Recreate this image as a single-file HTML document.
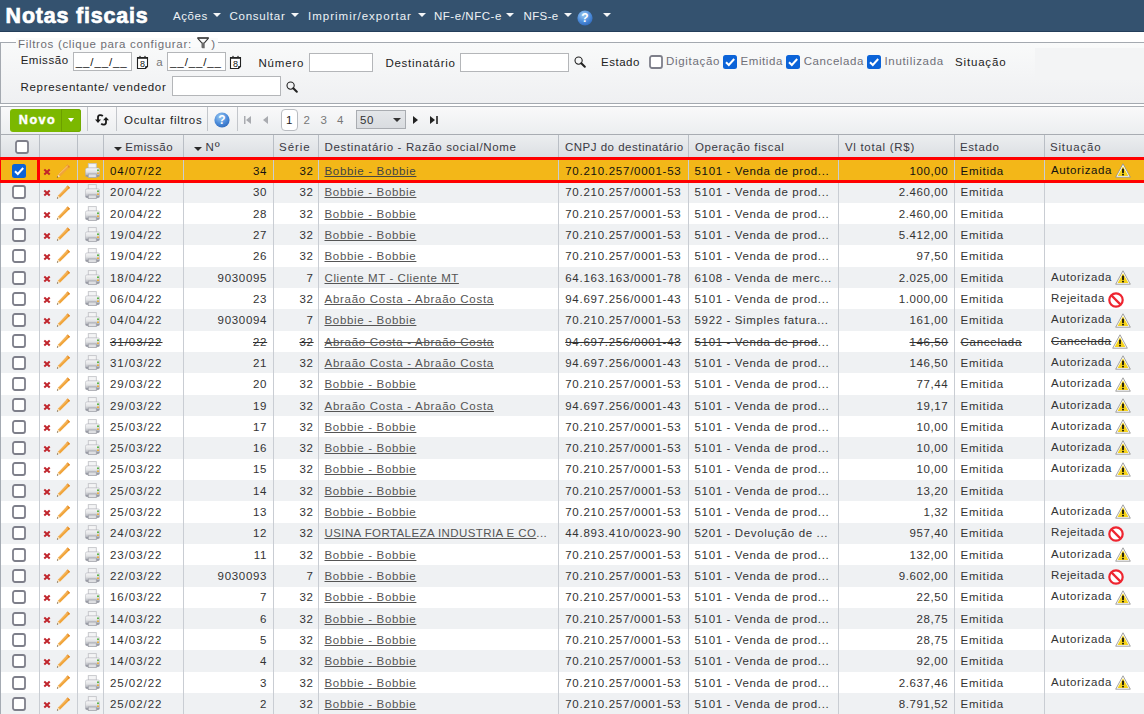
<!DOCTYPE html><html><head><meta charset="utf-8"><style>
*{box-sizing:border-box}
html,body{margin:0;padding:0}
body{width:1144px;height:714px;overflow:hidden;position:relative;background:#fff;font-family:"Liberation Sans",sans-serif;font-size:11.5px;color:#222}
.abs{position:absolute}
.t{position:absolute;white-space:nowrap;letter-spacing:0.6px}
svg{position:absolute;display:block}
#hdr{left:0;top:0;width:1144px;height:32px;background:#34526f;border-bottom:1px solid #243f5b}
#title{left:6px;top:3px;font-size:21.4px;font-weight:bold;color:#fff;line-height:26px;letter-spacing:0.2px}
.menu{color:#eef2f6;font-size:11.5px;top:8.4px;line-height:16px}
.arr{position:absolute;width:0;height:0;border-left:4.4px solid transparent;border-right:4.4px solid transparent;border-top:4.4px solid #f4f6f8}
#fs{left:0;top:42px;width:1160px;height:62px;border:1px solid #a4a9b0;background:linear-gradient(#f9fafa,#eff0f2)}
#legend{left:16px;top:38px;width:201.5px;height:9px;background:#fafbfb;}
.lab{line-height:14px}
.inp{position:absolute;background:#fff;border:1px solid #b4b6b9}
#tb{left:0;top:106px;width:1160px;height:29px;border-top:1px solid #a8acb2;border-bottom:1px solid #a8acb2;border-left:1px solid #a8acb2;background:linear-gradient(#f9f9fa,#eceef0)}
.sep{position:absolute;top:107px;width:1px;height:24px;background:#c3c6cb}
#th{left:0;top:135px;width:1144px;height:22px;background:linear-gradient(#eceef0,#dcdfe3);border-left:1px solid #a8acb2}
.vl{position:absolute;width:1px;background:#c9cdd3}
.row{position:absolute;left:0;width:1144px;border-left:1px solid #a5abb3}
.g{background:#eff1f3}
.sel{background:#f3b718}
.lnk{color:#555;text-decoration:underline}
.num{text-align:right;letter-spacing:0.75px}
.hd{color:#3a3a44;top:140px;line-height:14px}
.strike{text-decoration:line-through}.lnk.strike{text-decoration:underline line-through}
</style></head><body>
<div id="hdr" class="abs"></div>
<div id="title" class="t" style="left:5.6px;top:2.8px;letter-spacing:0.85px;-webkit-text-stroke:0.7px #fff">Notas fiscais</div>
<div class="t menu" style="left:172.9px;letter-spacing:0.575px">Ações</div>
<div class="arr" style="left:212.7px;top:12.8px"></div>
<div class="t menu" style="left:229.5px;letter-spacing:0.75px">Consultar</div>
<div class="arr" style="left:291px;top:12.8px"></div>
<div class="t menu" style="left:308px;letter-spacing:1.0px">Imprimir/exportar</div>
<div class="arr" style="left:417.6px;top:12.8px"></div>
<div class="t menu" style="left:434px;letter-spacing:0.522px">NF-e/NFC-e</div>
<div class="arr" style="left:506.4px;top:12.8px"></div>
<div class="t menu" style="left:523.5px;letter-spacing:0.375px">NFS-e</div>
<div class="arr" style="left:563.5px;top:12.8px"></div>
<svg style="left:577px;top:10px" width="16" height="16" viewBox="0 0 16 16"><defs><radialGradient id="hg" cx="0.4" cy="0.3" r="0.8"><stop offset="0" stop-color="#9cc9f2"/><stop offset="0.55" stop-color="#4d8ddb"/><stop offset="1" stop-color="#2a62b5"/></radialGradient></defs><circle cx="8" cy="8" r="7.6" fill="url(#hg)"/><text x="8" y="12.3" font-family="Liberation Sans" font-weight="bold" font-size="12" fill="#fff" text-anchor="middle">?</text></svg>
<div class="arr" style="left:602.7px;top:12.8px"></div>
<div id="fs" class="abs"></div>
<div id="legend" class="abs"></div>
<div class="t lab" style="left:18px;top:36.6px;color:#6e6e74;letter-spacing:0.677px">Filtros (clique para configurar:</div>
<svg style="left:197px;top:37px" width="13" height="13" viewBox="0 0 13 13"><path d="M0.3 0.3H11.8V1.7H0.3Z" fill="#111"/><path d="M0.8 1.4L5 6.2M11.3 1.4L7.2 6.2" stroke="#333" stroke-width="1.1"/><path d="M4.5 5.6H7.7V11.3L5.4 11.3L4.5 10.6Z" fill="#6a6a6a"/></svg>
<div class="t lab" style="left:211.2px;top:36.6px;color:#6e6e74">)</div>
<div class="t lab" style="left:20.65px;top:52.7px;color:#222;letter-spacing:0.558px;">Emissão</div>
<div class="inp" style="left:73px;top:52.3px;width:59.3px;height:19px"></div>
<div class="t lab" style="left:75.8px;top:54.9px;color:#111;letter-spacing:0.88px">__/__/__</div>
<svg style="left:135.5px;top:54.8px" width="13" height="15" viewBox="0 0 13 15"><path d="M1.5 2.5H11.5V11.5L9.5 13.5H1.5Z" fill="#fff" stroke="#222" stroke-width="1.1"/><path d="M1.5 3H11.5" stroke="#222" stroke-width="1.6"/><circle cx="4" cy="1.6" r="0.8" fill="#444"/><circle cx="9" cy="1.6" r="0.8" fill="#444"/><path d="M9.5 13.5V11.5H11.5" fill="none" stroke="#222" stroke-width="0.9"/><text x="6.4" y="12.1" font-family="Liberation Sans" font-size="9" fill="#111" text-anchor="middle">8</text></svg>
<div class="t lab" style="left:156.2px;top:54.5px;color:#777;letter-spacing:0px;">a</div>
<div class="inp" style="left:167.3px;top:52.3px;width:59.1px;height:19px"></div>
<div class="t lab" style="left:170.1px;top:54.9px;color:#111;letter-spacing:0.88px">__/__/__</div>
<svg style="left:229px;top:54.8px" width="13" height="15" viewBox="0 0 13 15"><path d="M1.5 2.5H11.5V11.5L9.5 13.5H1.5Z" fill="#fff" stroke="#222" stroke-width="1.1"/><path d="M1.5 3H11.5" stroke="#222" stroke-width="1.6"/><circle cx="4" cy="1.6" r="0.8" fill="#444"/><circle cx="9" cy="1.6" r="0.8" fill="#444"/><path d="M9.5 13.5V11.5H11.5" fill="none" stroke="#222" stroke-width="0.9"/><text x="6.4" y="12.1" font-family="Liberation Sans" font-size="9" fill="#111" text-anchor="middle">8</text></svg>
<div class="t lab" style="left:258.5px;top:56px;color:#222;letter-spacing:0.8px;">Número</div>
<div class="inp" style="left:309.3px;top:52.6px;width:63.4px;height:19.1px"></div>
<div class="t lab" style="left:385.4px;top:56px;color:#222;letter-spacing:0.745px;">Destinatário</div>
<div class="inp" style="left:460.4px;top:52.6px;width:108.4px;height:19.1px"></div>
<svg style="left:574px;top:56px" width="12" height="12" viewBox="0 0 12 12"><circle cx="4.6" cy="4.6" r="3.6" fill="none" stroke="#222" stroke-width="1.1"/><path d="M7.3 7.3L10.8 10.8" stroke="#222" stroke-width="2" stroke-linecap="round"/></svg>
<div class="t lab" style="left:601px;top:54.8px;color:#222;letter-spacing:0.52px;">Estado</div>
<svg class="fcb" style="left:648.7px;top:55px" width="14" height="14" viewBox="0 0 14 14"><rect x="1" y="1" width="12" height="12" rx="2" fill="#fff" stroke="#7e7f8a" stroke-width="1.8"/></svg>
<div class="t lab" style="left:666px;top:53.5px;color:#707078;letter-spacing:0.688px;">Digitação</div>
<svg class="fcb" style="left:723px;top:55px" width="14" height="14" viewBox="0 0 14 14"><rect x="0" y="0" width="14" height="14" rx="2.5" fill="#0b63d8"/><path d="M3 7.2L5.8 10L11.2 4" stroke="#fff" stroke-width="2" fill="none"/></svg>
<div class="t lab" style="left:740.5px;top:53.5px;color:#707078;letter-spacing:0.583px;">Emitida</div>
<svg class="fcb" style="left:786.4px;top:55px" width="14" height="14" viewBox="0 0 14 14"><rect x="0" y="0" width="14" height="14" rx="2.5" fill="#0b63d8"/><path d="M3 7.2L5.8 10L11.2 4" stroke="#fff" stroke-width="2" fill="none"/></svg>
<div class="t lab" style="left:803.7px;top:53.5px;color:#707078;letter-spacing:0.587px;">Cancelada</div>
<svg class="fcb" style="left:867px;top:55px" width="14" height="14" viewBox="0 0 14 14"><rect x="0" y="0" width="14" height="14" rx="2.5" fill="#0b63d8"/><path d="M3 7.2L5.8 10L11.2 4" stroke="#fff" stroke-width="2" fill="none"/></svg>
<div class="t lab" style="left:884.4px;top:53.5px;color:#707078;letter-spacing:0.7px;">Inutilizada</div>
<div class="t lab" style="left:955px;top:54.7px;color:#222;letter-spacing:0.829px;">Situação</div>
<div class="abs" style="left:1035px;top:48px;width:120px;height:31px;background:#f3f4f5"></div>
<div class="t lab" style="left:20.5px;top:80px;color:#222;letter-spacing:0.705px;">Representante/ vendedor</div>
<div class="inp" style="left:172.4px;top:76.4px;width:108.2px;height:19.6px"></div>
<svg style="left:286px;top:80.6px" width="12" height="12" viewBox="0 0 12 12"><circle cx="4.6" cy="4.6" r="3.6" fill="none" stroke="#222" stroke-width="1.1"/><path d="M7.3 7.3L10.8 10.8" stroke="#222" stroke-width="2" stroke-linecap="round"/></svg>
<div id="tb" class="abs"></div>
<div class="abs" style="left:10px;top:109px;width:71px;height:23px;border-radius:3px;background:#7bb800;"></div>
<div class="abs" style="left:61px;top:109px;width:20px;height:23px;border-radius:0 3px 3px 0;border:1px solid #72ab00;border-left:1px solid #6c9f00"></div>
<div class="t" style="left:18.8px;top:112.1px;font-size:12.6px;font-weight:bold;color:#fff;line-height:16px;letter-spacing:1.5px;-webkit-text-stroke:0.45px #fff">Novo</div>
<div class="arr" style="left:67.5px;top:118px;border-left-width:3.5px;border-right-width:3.5px;border-top:4px solid #fff"></div>
<div class="sep" style="left:87px"></div>
<div class="sep" style="left:116px"></div>
<div class="sep" style="left:207.3px"></div>
<div class="sep" style="left:237.3px"></div>
<svg style="left:94px;top:113px" width="16" height="14" viewBox="0 0 16 14"><path d="M8.8 3.1C7.5 1.7 4 1.6 4 4.2V7.3" fill="none" stroke="#1a1a1a" stroke-width="1.8"/><path d="M1 6.6H7L4 9.9Z" fill="#1a1a1a"/><path d="M7.2 10.6C8.5 12 12 12.1 12 9.5V6.6" fill="none" stroke="#1a1a1a" stroke-width="1.8"/><path d="M9 7.2H15L12 3.9Z" fill="#1a1a1a"/></svg>
<div class="t" style="left:124px;top:112.8px;line-height:14px;color:#222;letter-spacing:0.714px">Ocultar filtros</div>
<svg style="left:214px;top:111.8px" width="16" height="16" viewBox="0 0 16 16"><circle cx="8" cy="8" r="7.6" fill="url(#hg)"/><text x="8" y="12.3" font-family="Liberation Sans" font-weight="bold" font-size="12" fill="#fff" text-anchor="middle">?</text></svg>
<svg style="left:243.5px;top:116px" width="8" height="8" viewBox="0 0 8 8"><rect x="0" y="0" width="1.5" height="8" fill="#a9abb0"/><path d="M7 0V8L2 4Z" fill="#a9abb0"/></svg>
<svg style="left:262.5px;top:116px" width="5" height="8" viewBox="0 0 5 8"><path d="M5 0V8L0 4Z" fill="#a9abb0"/></svg>
<div class="abs" style="left:281.4px;top:109.2px;width:16.5px;height:21.6px;border:1px solid #b9bcc1;border-radius:4px;background:#fff"></div>
<div class="t" style="left:286px;top:113px;line-height:14px;color:#222">1</div>
<div class="t" style="left:303.4px;top:113px;line-height:14px;color:#777">2</div>
<div class="t" style="left:320.5px;top:113px;line-height:14px;color:#777">3</div>
<div class="t" style="left:337px;top:113px;line-height:14px;color:#777">4</div>
<div class="abs" style="left:356.4px;top:110.2px;width:49.3px;height:18.5px;border:1px solid #a9acb1;background:linear-gradient(#e4e6e9,#d9dce0)"></div>
<div class="t" style="left:360px;top:112.5px;line-height:14px;color:#333">50</div>
<div class="arr" style="left:392.7px;top:118px;border-top-color:#333;border-left-width:4.2px;border-right-width:4.2px"></div>
<svg style="left:412.5px;top:116px" width="5" height="8" viewBox="0 0 5 8"><path d="M0 0V8L5 4Z" fill="#222"/></svg>
<svg style="left:429.5px;top:116px" width="8" height="8" viewBox="0 0 8 8"><path d="M0 0V8L5 4Z" fill="#222"/><rect x="6.2" y="0" width="1.6" height="8" fill="#222"/></svg>
<div id="th" class="abs"></div>
<div class="vl" style="left:38.8px;top:135px;height:22px;background:#b9bec5"></div>
<div class="vl" style="left:76.9px;top:135px;height:22px;background:#b9bec5"></div>
<div class="vl" style="left:103.1px;top:135px;height:22px;background:#b9bec5"></div>
<div class="vl" style="left:183.1px;top:135px;height:22px;background:#b9bec5"></div>
<div class="vl" style="left:273.1px;top:135px;height:22px;background:#b9bec5"></div>
<div class="vl" style="left:318.1px;top:135px;height:22px;background:#b9bec5"></div>
<div class="vl" style="left:558px;top:135px;height:22px;background:#b9bec5"></div>
<div class="vl" style="left:688.1px;top:135px;height:22px;background:#b9bec5"></div>
<div class="vl" style="left:838px;top:135px;height:22px;background:#b9bec5"></div>
<div class="vl" style="left:954.2px;top:135px;height:22px;background:#b9bec5"></div>
<div class="vl" style="left:1044.2px;top:135px;height:22px;background:#b9bec5"></div>
<svg class="cb" style="left:15px;top:140px" width="14" height="14" viewBox="0 0 14 14"><rect x="1" y="1" width="12" height="12" rx="2" fill="#fff" stroke="#7e7f8a" stroke-width="1.8"/></svg>
<div class="arr" style="left:113.8px;top:146.8px;border-top-color:#2a2a2a;border-left-width:4.2px;border-right-width:4.2px;border-top-width:4.2px"></div>
<div class="arr" style="left:194px;top:146.8px;border-top-color:#2a2a2a;border-left-width:4.2px;border-right-width:4.2px;border-top-width:4.2px"></div>
<div class="t hd" style="left:125.3px;letter-spacing:0.55px">Emissão</div>
<div class="t hd" style="left:205.6px;letter-spacing:0.9px">N<span style="font-size:13.5px;position:relative;top:-0.5px;letter-spacing:0">º</span></div>
<div class="t hd" style="left:279px;letter-spacing:0.975px">Série</div>
<div class="t hd" style="left:324.6px;letter-spacing:0.648px">Destinatário - Razão social/Nome</div>
<div class="t hd" style="left:564.9px;letter-spacing:0.505px">CNPJ do destinatário</div>
<div class="t hd" style="left:695px;letter-spacing:0.629px">Operação fiscal</div>
<div class="t hd" style="left:844.9px;letter-spacing:0.717px">Vl total (R$)</div>
<div class="t hd" style="left:960px;letter-spacing:0.6px">Estado</div>
<div class="t hd" style="left:1049.9px;letter-spacing:0.857px">Situação</div>
<div class="row sel" style="top:160.1px;height:21.37px"></div>
<div class="vl" style="left:38.8px;top:160.1px;height:21.37px"></div>
<div class="vl" style="left:76.9px;top:160.1px;height:21.37px"></div>
<div class="vl" style="left:103.1px;top:160.1px;height:21.37px"></div>
<div class="vl" style="left:183.1px;top:160.1px;height:21.37px"></div>
<div class="vl" style="left:273.1px;top:160.1px;height:21.37px"></div>
<div class="vl" style="left:318.1px;top:160.1px;height:21.37px"></div>
<div class="vl" style="left:558px;top:160.1px;height:21.37px"></div>
<div class="vl" style="left:688.1px;top:160.1px;height:21.37px"></div>
<div class="vl" style="left:838px;top:160.1px;height:21.37px"></div>
<div class="vl" style="left:954.2px;top:160.1px;height:21.37px"></div>
<div class="vl" style="left:1044.2px;top:160.1px;height:21.37px"></div>
<svg class="cb" style="left:12px;top:163.9px" width="14" height="14" viewBox="0 0 14 14"><rect x="0" y="0" width="14" height="14" rx="2.5" fill="#0b63d8"/><path d="M3 7.2L5.8 10L11.2 4" stroke="#fff" stroke-width="2" fill="none"/></svg>
<svg style="left:42.7px;top:168px" width="8" height="8" viewBox="0 0 8 8"><path d="M1.3 1.5L6.7 6.5M6.7 1.5L1.3 6.5" stroke="#c0242b" stroke-width="2"/></svg>
<svg style="left:56px;top:163.5px" width="15" height="14" viewBox="0 0 15 14"><path d="M11.6 0.6L14 2.8L4.2 12.4L1.3 13.4L2.1 10.4Z" fill="#f0a43a"/><path d="M11.6 0.6L14 2.8L12.9 3.9L10.5 1.7Z" fill="#e58a22"/><path d="M2.1 10.4L4.2 12.4L1.3 13.4Z" fill="#f6dcb5"/><path d="M1.2 12.3L2.2 13.2L0.9 13.6Z" fill="#222"/><path d="M3 10.2L12.3 1.3" stroke="#f9c57a" stroke-width="0.9"/></svg>
<svg style="left:84.6px;top:162.9px" width="15" height="15" viewBox="0 0 15 15"><defs><linearGradient id="pg" x1="0" y1="0" x2="0" y2="1"><stop offset="0" stop-color="#f7f7f8"/><stop offset="0.45" stop-color="#e3e4e6"/><stop offset="0.75" stop-color="#b9bbc2"/><stop offset="1" stop-color="#6f7280"/></linearGradient></defs><rect x="3.3" y="0.6" width="8" height="4.6" fill="#f4f4f5" stroke="#c4c5c9" stroke-width="0.9"/><rect x="0.4" y="4.9" width="14.2" height="8.8" rx="1.6" fill="url(#pg)" stroke="#a9abb2" stroke-width="0.5"/><rect x="3.3" y="11" width="8" height="3.6" fill="#dedfe2" stroke="#a4a6ad" stroke-width="0.8"/><circle cx="13" cy="7.3" r="1" fill="#4fae3a"/><circle cx="13" cy="10.2" r="0.9" fill="#efa822"/></svg>
<div class="t" style="left:109.9px;top:161px;line-height:21.32px;color:#111;letter-spacing:0.98px;">04/07/22</div>
<div class="t num" style="right:876.8px;top:161px;line-height:21.32px;color:#111;letter-spacing:0.7px;">34</div>
<div class="t num" style="right:830.4px;top:161px;line-height:21.32px;color:#111;letter-spacing:0.7px;">32</div>
<div class="t lnk" style="left:324.5px;top:161px;line-height:21.32px;color:#444;letter-spacing:0.671px">Bobbie - Bobbie</div>
<div class="t" style="left:565.2px;top:161px;line-height:21.32px;color:#111;letter-spacing:0.74px;">70.210.257/0001-53</div>
<div class="t" style="left:694.6px;top:161px;line-height:21.32px;color:#111;letter-spacing:0.632px;">5101 - Venda de prod<span style="text-decoration:none;display:inline-block">...</span></div>
<div class="t num" style="right:195.7px;top:161px;line-height:21.32px;color:#111;letter-spacing:0.6px;">100,00</div>
<div class="t" style="left:960.6px;top:161px;line-height:21.32px;color:#111;letter-spacing:0.72px;">Emitida</div>
<div class="t" style="left:1051px;top:160px;line-height:21.32px;color:#111;letter-spacing:0.6px">Autorizada</div>
<svg style="left:1115.2px;top:163.3px" width="16" height="15" viewBox="0 0 16 15"><path d="M8 0.8L15.3 14.2H0.7Z" fill="#fff" stroke="#8b8b8b" stroke-width="0.8" stroke-linejoin="round"/><path d="M8 3.2L13.4 13H2.6Z" fill="#f5d21a"/><rect x="7.1" y="5.4" width="1.8" height="4.6" rx="0.6" fill="#111"/><rect x="7.1" y="10.8" width="1.8" height="1.6" fill="#111"/></svg>
<div class="row g" style="top:181.42px;height:21.37px"></div>
<div class="vl" style="left:38.8px;top:181.42px;height:21.37px"></div>
<div class="vl" style="left:76.9px;top:181.42px;height:21.37px"></div>
<div class="vl" style="left:103.1px;top:181.42px;height:21.37px"></div>
<div class="vl" style="left:183.1px;top:181.42px;height:21.37px"></div>
<div class="vl" style="left:273.1px;top:181.42px;height:21.37px"></div>
<div class="vl" style="left:318.1px;top:181.42px;height:21.37px"></div>
<div class="vl" style="left:558px;top:181.42px;height:21.37px"></div>
<div class="vl" style="left:688.1px;top:181.42px;height:21.37px"></div>
<div class="vl" style="left:838px;top:181.42px;height:21.37px"></div>
<div class="vl" style="left:954.2px;top:181.42px;height:21.37px"></div>
<div class="vl" style="left:1044.2px;top:181.42px;height:21.37px"></div>
<svg class="cb" style="left:12px;top:185.22px" width="14" height="14" viewBox="0 0 14 14"><rect x="1" y="1" width="12" height="12" rx="2" fill="#fff" stroke="#7e7f8a" stroke-width="1.8"/></svg>
<svg style="left:42.7px;top:189.32px" width="8" height="8" viewBox="0 0 8 8"><path d="M1.3 1.5L6.7 6.5M6.7 1.5L1.3 6.5" stroke="#c0242b" stroke-width="2"/></svg>
<svg style="left:56px;top:184.82px" width="15" height="14" viewBox="0 0 15 14"><path d="M11.6 0.6L14 2.8L4.2 12.4L1.3 13.4L2.1 10.4Z" fill="#f0a43a"/><path d="M11.6 0.6L14 2.8L12.9 3.9L10.5 1.7Z" fill="#e58a22"/><path d="M2.1 10.4L4.2 12.4L1.3 13.4Z" fill="#f6dcb5"/><path d="M1.2 12.3L2.2 13.2L0.9 13.6Z" fill="#222"/><path d="M3 10.2L12.3 1.3" stroke="#f9c57a" stroke-width="0.9"/></svg>
<svg style="left:84.6px;top:184.22px" width="15" height="15" viewBox="0 0 15 15"><defs><linearGradient id="pg" x1="0" y1="0" x2="0" y2="1"><stop offset="0" stop-color="#f7f7f8"/><stop offset="0.45" stop-color="#e3e4e6"/><stop offset="0.75" stop-color="#b9bbc2"/><stop offset="1" stop-color="#6f7280"/></linearGradient></defs><rect x="3.3" y="0.6" width="8" height="4.6" fill="#f4f4f5" stroke="#c4c5c9" stroke-width="0.9"/><rect x="0.4" y="4.9" width="14.2" height="8.8" rx="1.6" fill="url(#pg)" stroke="#a9abb2" stroke-width="0.5"/><rect x="3.3" y="11" width="8" height="3.6" fill="#dedfe2" stroke="#a4a6ad" stroke-width="0.8"/><circle cx="13" cy="7.3" r="1" fill="#4fae3a"/><circle cx="13" cy="10.2" r="0.9" fill="#efa822"/></svg>
<div class="t" style="left:109.9px;top:182.32px;line-height:21.32px;color:#333;letter-spacing:0.98px;">20/04/22</div>
<div class="t num" style="right:876.8px;top:182.32px;line-height:21.32px;color:#333;letter-spacing:0.7px;">30</div>
<div class="t num" style="right:830.4px;top:182.32px;line-height:21.32px;color:#333;letter-spacing:0.7px;">32</div>
<div class="t lnk" style="left:324.5px;top:182.32px;line-height:21.32px;color:#555;letter-spacing:0.671px">Bobbie - Bobbie</div>
<div class="t" style="left:565.2px;top:182.32px;line-height:21.32px;color:#333;letter-spacing:0.74px;">70.210.257/0001-53</div>
<div class="t" style="left:694.6px;top:182.32px;line-height:21.32px;color:#333;letter-spacing:0.632px;">5101 - Venda de prod<span style="text-decoration:none;display:inline-block">...</span></div>
<div class="t num" style="right:195.7px;top:182.32px;line-height:21.32px;color:#333;letter-spacing:0.6px;">2.460,00</div>
<div class="t" style="left:960.6px;top:182.32px;line-height:21.32px;color:#333;letter-spacing:0.72px;">Emitida</div>
<div class="row" style="top:202.74px;height:21.37px"></div>
<div class="vl" style="left:38.8px;top:202.74px;height:21.37px"></div>
<div class="vl" style="left:76.9px;top:202.74px;height:21.37px"></div>
<div class="vl" style="left:103.1px;top:202.74px;height:21.37px"></div>
<div class="vl" style="left:183.1px;top:202.74px;height:21.37px"></div>
<div class="vl" style="left:273.1px;top:202.74px;height:21.37px"></div>
<div class="vl" style="left:318.1px;top:202.74px;height:21.37px"></div>
<div class="vl" style="left:558px;top:202.74px;height:21.37px"></div>
<div class="vl" style="left:688.1px;top:202.74px;height:21.37px"></div>
<div class="vl" style="left:838px;top:202.74px;height:21.37px"></div>
<div class="vl" style="left:954.2px;top:202.74px;height:21.37px"></div>
<div class="vl" style="left:1044.2px;top:202.74px;height:21.37px"></div>
<svg class="cb" style="left:12px;top:206.54px" width="14" height="14" viewBox="0 0 14 14"><rect x="1" y="1" width="12" height="12" rx="2" fill="#fff" stroke="#7e7f8a" stroke-width="1.8"/></svg>
<svg style="left:42.7px;top:210.64px" width="8" height="8" viewBox="0 0 8 8"><path d="M1.3 1.5L6.7 6.5M6.7 1.5L1.3 6.5" stroke="#c0242b" stroke-width="2"/></svg>
<svg style="left:56px;top:206.14px" width="15" height="14" viewBox="0 0 15 14"><path d="M11.6 0.6L14 2.8L4.2 12.4L1.3 13.4L2.1 10.4Z" fill="#f0a43a"/><path d="M11.6 0.6L14 2.8L12.9 3.9L10.5 1.7Z" fill="#e58a22"/><path d="M2.1 10.4L4.2 12.4L1.3 13.4Z" fill="#f6dcb5"/><path d="M1.2 12.3L2.2 13.2L0.9 13.6Z" fill="#222"/><path d="M3 10.2L12.3 1.3" stroke="#f9c57a" stroke-width="0.9"/></svg>
<svg style="left:84.6px;top:205.54px" width="15" height="15" viewBox="0 0 15 15"><defs><linearGradient id="pg" x1="0" y1="0" x2="0" y2="1"><stop offset="0" stop-color="#f7f7f8"/><stop offset="0.45" stop-color="#e3e4e6"/><stop offset="0.75" stop-color="#b9bbc2"/><stop offset="1" stop-color="#6f7280"/></linearGradient></defs><rect x="3.3" y="0.6" width="8" height="4.6" fill="#f4f4f5" stroke="#c4c5c9" stroke-width="0.9"/><rect x="0.4" y="4.9" width="14.2" height="8.8" rx="1.6" fill="url(#pg)" stroke="#a9abb2" stroke-width="0.5"/><rect x="3.3" y="11" width="8" height="3.6" fill="#dedfe2" stroke="#a4a6ad" stroke-width="0.8"/><circle cx="13" cy="7.3" r="1" fill="#4fae3a"/><circle cx="13" cy="10.2" r="0.9" fill="#efa822"/></svg>
<div class="t" style="left:109.9px;top:203.64px;line-height:21.32px;color:#333;letter-spacing:0.98px;">20/04/22</div>
<div class="t num" style="right:876.8px;top:203.64px;line-height:21.32px;color:#333;letter-spacing:0.7px;">28</div>
<div class="t num" style="right:830.4px;top:203.64px;line-height:21.32px;color:#333;letter-spacing:0.7px;">32</div>
<div class="t lnk" style="left:324.5px;top:203.64px;line-height:21.32px;color:#555;letter-spacing:0.671px">Bobbie - Bobbie</div>
<div class="t" style="left:565.2px;top:203.64px;line-height:21.32px;color:#333;letter-spacing:0.74px;">70.210.257/0001-53</div>
<div class="t" style="left:694.6px;top:203.64px;line-height:21.32px;color:#333;letter-spacing:0.632px;">5101 - Venda de prod<span style="text-decoration:none;display:inline-block">...</span></div>
<div class="t num" style="right:195.7px;top:203.64px;line-height:21.32px;color:#333;letter-spacing:0.6px;">2.460,00</div>
<div class="t" style="left:960.6px;top:203.64px;line-height:21.32px;color:#333;letter-spacing:0.72px;">Emitida</div>
<div class="row g" style="top:224.06px;height:21.37px"></div>
<div class="vl" style="left:38.8px;top:224.06px;height:21.37px"></div>
<div class="vl" style="left:76.9px;top:224.06px;height:21.37px"></div>
<div class="vl" style="left:103.1px;top:224.06px;height:21.37px"></div>
<div class="vl" style="left:183.1px;top:224.06px;height:21.37px"></div>
<div class="vl" style="left:273.1px;top:224.06px;height:21.37px"></div>
<div class="vl" style="left:318.1px;top:224.06px;height:21.37px"></div>
<div class="vl" style="left:558px;top:224.06px;height:21.37px"></div>
<div class="vl" style="left:688.1px;top:224.06px;height:21.37px"></div>
<div class="vl" style="left:838px;top:224.06px;height:21.37px"></div>
<div class="vl" style="left:954.2px;top:224.06px;height:21.37px"></div>
<div class="vl" style="left:1044.2px;top:224.06px;height:21.37px"></div>
<svg class="cb" style="left:12px;top:227.86px" width="14" height="14" viewBox="0 0 14 14"><rect x="1" y="1" width="12" height="12" rx="2" fill="#fff" stroke="#7e7f8a" stroke-width="1.8"/></svg>
<svg style="left:42.7px;top:231.96px" width="8" height="8" viewBox="0 0 8 8"><path d="M1.3 1.5L6.7 6.5M6.7 1.5L1.3 6.5" stroke="#c0242b" stroke-width="2"/></svg>
<svg style="left:56px;top:227.46px" width="15" height="14" viewBox="0 0 15 14"><path d="M11.6 0.6L14 2.8L4.2 12.4L1.3 13.4L2.1 10.4Z" fill="#f0a43a"/><path d="M11.6 0.6L14 2.8L12.9 3.9L10.5 1.7Z" fill="#e58a22"/><path d="M2.1 10.4L4.2 12.4L1.3 13.4Z" fill="#f6dcb5"/><path d="M1.2 12.3L2.2 13.2L0.9 13.6Z" fill="#222"/><path d="M3 10.2L12.3 1.3" stroke="#f9c57a" stroke-width="0.9"/></svg>
<svg style="left:84.6px;top:226.86px" width="15" height="15" viewBox="0 0 15 15"><defs><linearGradient id="pg" x1="0" y1="0" x2="0" y2="1"><stop offset="0" stop-color="#f7f7f8"/><stop offset="0.45" stop-color="#e3e4e6"/><stop offset="0.75" stop-color="#b9bbc2"/><stop offset="1" stop-color="#6f7280"/></linearGradient></defs><rect x="3.3" y="0.6" width="8" height="4.6" fill="#f4f4f5" stroke="#c4c5c9" stroke-width="0.9"/><rect x="0.4" y="4.9" width="14.2" height="8.8" rx="1.6" fill="url(#pg)" stroke="#a9abb2" stroke-width="0.5"/><rect x="3.3" y="11" width="8" height="3.6" fill="#dedfe2" stroke="#a4a6ad" stroke-width="0.8"/><circle cx="13" cy="7.3" r="1" fill="#4fae3a"/><circle cx="13" cy="10.2" r="0.9" fill="#efa822"/></svg>
<div class="t" style="left:109.9px;top:224.96px;line-height:21.32px;color:#333;letter-spacing:0.98px;">19/04/22</div>
<div class="t num" style="right:876.8px;top:224.96px;line-height:21.32px;color:#333;letter-spacing:0.7px;">27</div>
<div class="t num" style="right:830.4px;top:224.96px;line-height:21.32px;color:#333;letter-spacing:0.7px;">32</div>
<div class="t lnk" style="left:324.5px;top:224.96px;line-height:21.32px;color:#555;letter-spacing:0.671px">Bobbie - Bobbie</div>
<div class="t" style="left:565.2px;top:224.96px;line-height:21.32px;color:#333;letter-spacing:0.74px;">70.210.257/0001-53</div>
<div class="t" style="left:694.6px;top:224.96px;line-height:21.32px;color:#333;letter-spacing:0.632px;">5101 - Venda de prod<span style="text-decoration:none;display:inline-block">...</span></div>
<div class="t num" style="right:195.7px;top:224.96px;line-height:21.32px;color:#333;letter-spacing:0.6px;">5.412,00</div>
<div class="t" style="left:960.6px;top:224.96px;line-height:21.32px;color:#333;letter-spacing:0.72px;">Emitida</div>
<div class="row" style="top:245.38px;height:21.37px"></div>
<div class="vl" style="left:38.8px;top:245.38px;height:21.37px"></div>
<div class="vl" style="left:76.9px;top:245.38px;height:21.37px"></div>
<div class="vl" style="left:103.1px;top:245.38px;height:21.37px"></div>
<div class="vl" style="left:183.1px;top:245.38px;height:21.37px"></div>
<div class="vl" style="left:273.1px;top:245.38px;height:21.37px"></div>
<div class="vl" style="left:318.1px;top:245.38px;height:21.37px"></div>
<div class="vl" style="left:558px;top:245.38px;height:21.37px"></div>
<div class="vl" style="left:688.1px;top:245.38px;height:21.37px"></div>
<div class="vl" style="left:838px;top:245.38px;height:21.37px"></div>
<div class="vl" style="left:954.2px;top:245.38px;height:21.37px"></div>
<div class="vl" style="left:1044.2px;top:245.38px;height:21.37px"></div>
<svg class="cb" style="left:12px;top:249.18px" width="14" height="14" viewBox="0 0 14 14"><rect x="1" y="1" width="12" height="12" rx="2" fill="#fff" stroke="#7e7f8a" stroke-width="1.8"/></svg>
<svg style="left:42.7px;top:253.28px" width="8" height="8" viewBox="0 0 8 8"><path d="M1.3 1.5L6.7 6.5M6.7 1.5L1.3 6.5" stroke="#c0242b" stroke-width="2"/></svg>
<svg style="left:56px;top:248.78px" width="15" height="14" viewBox="0 0 15 14"><path d="M11.6 0.6L14 2.8L4.2 12.4L1.3 13.4L2.1 10.4Z" fill="#f0a43a"/><path d="M11.6 0.6L14 2.8L12.9 3.9L10.5 1.7Z" fill="#e58a22"/><path d="M2.1 10.4L4.2 12.4L1.3 13.4Z" fill="#f6dcb5"/><path d="M1.2 12.3L2.2 13.2L0.9 13.6Z" fill="#222"/><path d="M3 10.2L12.3 1.3" stroke="#f9c57a" stroke-width="0.9"/></svg>
<svg style="left:84.6px;top:248.18px" width="15" height="15" viewBox="0 0 15 15"><defs><linearGradient id="pg" x1="0" y1="0" x2="0" y2="1"><stop offset="0" stop-color="#f7f7f8"/><stop offset="0.45" stop-color="#e3e4e6"/><stop offset="0.75" stop-color="#b9bbc2"/><stop offset="1" stop-color="#6f7280"/></linearGradient></defs><rect x="3.3" y="0.6" width="8" height="4.6" fill="#f4f4f5" stroke="#c4c5c9" stroke-width="0.9"/><rect x="0.4" y="4.9" width="14.2" height="8.8" rx="1.6" fill="url(#pg)" stroke="#a9abb2" stroke-width="0.5"/><rect x="3.3" y="11" width="8" height="3.6" fill="#dedfe2" stroke="#a4a6ad" stroke-width="0.8"/><circle cx="13" cy="7.3" r="1" fill="#4fae3a"/><circle cx="13" cy="10.2" r="0.9" fill="#efa822"/></svg>
<div class="t" style="left:109.9px;top:246.28px;line-height:21.32px;color:#333;letter-spacing:0.98px;">19/04/22</div>
<div class="t num" style="right:876.8px;top:246.28px;line-height:21.32px;color:#333;letter-spacing:0.7px;">26</div>
<div class="t num" style="right:830.4px;top:246.28px;line-height:21.32px;color:#333;letter-spacing:0.7px;">32</div>
<div class="t lnk" style="left:324.5px;top:246.28px;line-height:21.32px;color:#555;letter-spacing:0.671px">Bobbie - Bobbie</div>
<div class="t" style="left:565.2px;top:246.28px;line-height:21.32px;color:#333;letter-spacing:0.74px;">70.210.257/0001-53</div>
<div class="t" style="left:694.6px;top:246.28px;line-height:21.32px;color:#333;letter-spacing:0.632px;">5101 - Venda de prod<span style="text-decoration:none;display:inline-block">...</span></div>
<div class="t num" style="right:195.7px;top:246.28px;line-height:21.32px;color:#333;letter-spacing:0.6px;">97,50</div>
<div class="t" style="left:960.6px;top:246.28px;line-height:21.32px;color:#333;letter-spacing:0.72px;">Emitida</div>
<div class="row g" style="top:266.7px;height:21.37px"></div>
<div class="vl" style="left:38.8px;top:266.7px;height:21.37px"></div>
<div class="vl" style="left:76.9px;top:266.7px;height:21.37px"></div>
<div class="vl" style="left:103.1px;top:266.7px;height:21.37px"></div>
<div class="vl" style="left:183.1px;top:266.7px;height:21.37px"></div>
<div class="vl" style="left:273.1px;top:266.7px;height:21.37px"></div>
<div class="vl" style="left:318.1px;top:266.7px;height:21.37px"></div>
<div class="vl" style="left:558px;top:266.7px;height:21.37px"></div>
<div class="vl" style="left:688.1px;top:266.7px;height:21.37px"></div>
<div class="vl" style="left:838px;top:266.7px;height:21.37px"></div>
<div class="vl" style="left:954.2px;top:266.7px;height:21.37px"></div>
<div class="vl" style="left:1044.2px;top:266.7px;height:21.37px"></div>
<svg class="cb" style="left:12px;top:270.5px" width="14" height="14" viewBox="0 0 14 14"><rect x="1" y="1" width="12" height="12" rx="2" fill="#fff" stroke="#7e7f8a" stroke-width="1.8"/></svg>
<svg style="left:42.7px;top:274.6px" width="8" height="8" viewBox="0 0 8 8"><path d="M1.3 1.5L6.7 6.5M6.7 1.5L1.3 6.5" stroke="#c0242b" stroke-width="2"/></svg>
<svg style="left:56px;top:270.1px" width="15" height="14" viewBox="0 0 15 14"><path d="M11.6 0.6L14 2.8L4.2 12.4L1.3 13.4L2.1 10.4Z" fill="#f0a43a"/><path d="M11.6 0.6L14 2.8L12.9 3.9L10.5 1.7Z" fill="#e58a22"/><path d="M2.1 10.4L4.2 12.4L1.3 13.4Z" fill="#f6dcb5"/><path d="M1.2 12.3L2.2 13.2L0.9 13.6Z" fill="#222"/><path d="M3 10.2L12.3 1.3" stroke="#f9c57a" stroke-width="0.9"/></svg>
<svg style="left:84.6px;top:269.5px" width="15" height="15" viewBox="0 0 15 15"><defs><linearGradient id="pg" x1="0" y1="0" x2="0" y2="1"><stop offset="0" stop-color="#f7f7f8"/><stop offset="0.45" stop-color="#e3e4e6"/><stop offset="0.75" stop-color="#b9bbc2"/><stop offset="1" stop-color="#6f7280"/></linearGradient></defs><rect x="3.3" y="0.6" width="8" height="4.6" fill="#f4f4f5" stroke="#c4c5c9" stroke-width="0.9"/><rect x="0.4" y="4.9" width="14.2" height="8.8" rx="1.6" fill="url(#pg)" stroke="#a9abb2" stroke-width="0.5"/><rect x="3.3" y="11" width="8" height="3.6" fill="#dedfe2" stroke="#a4a6ad" stroke-width="0.8"/><circle cx="13" cy="7.3" r="1" fill="#4fae3a"/><circle cx="13" cy="10.2" r="0.9" fill="#efa822"/></svg>
<div class="t" style="left:109.9px;top:267.6px;line-height:21.32px;color:#333;letter-spacing:0.98px;">18/04/22</div>
<div class="t num" style="right:876.8px;top:267.6px;line-height:21.32px;color:#333;letter-spacing:0.7px;">9030095</div>
<div class="t num" style="right:830.4px;top:267.6px;line-height:21.32px;color:#333;letter-spacing:0.7px;">7</div>
<div class="t lnk" style="left:324.5px;top:267.6px;line-height:21.32px;color:#555;letter-spacing:0.573px">Cliente MT - Cliente MT</div>
<div class="t" style="left:565.2px;top:267.6px;line-height:21.32px;color:#333;letter-spacing:0.74px;">64.163.163/0001-78</div>
<div class="t" style="left:694.6px;top:267.6px;line-height:21.32px;color:#333;letter-spacing:0.632px;">6108 - Venda de merc<span style="text-decoration:none;display:inline-block">...</span></div>
<div class="t num" style="right:195.7px;top:267.6px;line-height:21.32px;color:#333;letter-spacing:0.6px;">2.025,00</div>
<div class="t" style="left:960.6px;top:267.6px;line-height:21.32px;color:#333;letter-spacing:0.72px;">Emitida</div>
<div class="t" style="left:1051px;top:266.6px;line-height:21.32px;color:#333;letter-spacing:0.6px">Autorizada</div>
<svg style="left:1115.2px;top:269.9px" width="16" height="15" viewBox="0 0 16 15"><path d="M8 0.8L15.3 14.2H0.7Z" fill="#fff" stroke="#8b8b8b" stroke-width="0.8" stroke-linejoin="round"/><path d="M8 3.2L13.4 13H2.6Z" fill="#f5d21a"/><rect x="7.1" y="5.4" width="1.8" height="4.6" rx="0.6" fill="#111"/><rect x="7.1" y="10.8" width="1.8" height="1.6" fill="#111"/></svg>
<div class="row" style="top:288.02px;height:21.37px"></div>
<div class="vl" style="left:38.8px;top:288.02px;height:21.37px"></div>
<div class="vl" style="left:76.9px;top:288.02px;height:21.37px"></div>
<div class="vl" style="left:103.1px;top:288.02px;height:21.37px"></div>
<div class="vl" style="left:183.1px;top:288.02px;height:21.37px"></div>
<div class="vl" style="left:273.1px;top:288.02px;height:21.37px"></div>
<div class="vl" style="left:318.1px;top:288.02px;height:21.37px"></div>
<div class="vl" style="left:558px;top:288.02px;height:21.37px"></div>
<div class="vl" style="left:688.1px;top:288.02px;height:21.37px"></div>
<div class="vl" style="left:838px;top:288.02px;height:21.37px"></div>
<div class="vl" style="left:954.2px;top:288.02px;height:21.37px"></div>
<div class="vl" style="left:1044.2px;top:288.02px;height:21.37px"></div>
<svg class="cb" style="left:12px;top:291.82px" width="14" height="14" viewBox="0 0 14 14"><rect x="1" y="1" width="12" height="12" rx="2" fill="#fff" stroke="#7e7f8a" stroke-width="1.8"/></svg>
<svg style="left:42.7px;top:295.92px" width="8" height="8" viewBox="0 0 8 8"><path d="M1.3 1.5L6.7 6.5M6.7 1.5L1.3 6.5" stroke="#c0242b" stroke-width="2"/></svg>
<svg style="left:56px;top:291.42px" width="15" height="14" viewBox="0 0 15 14"><path d="M11.6 0.6L14 2.8L4.2 12.4L1.3 13.4L2.1 10.4Z" fill="#f0a43a"/><path d="M11.6 0.6L14 2.8L12.9 3.9L10.5 1.7Z" fill="#e58a22"/><path d="M2.1 10.4L4.2 12.4L1.3 13.4Z" fill="#f6dcb5"/><path d="M1.2 12.3L2.2 13.2L0.9 13.6Z" fill="#222"/><path d="M3 10.2L12.3 1.3" stroke="#f9c57a" stroke-width="0.9"/></svg>
<svg style="left:84.6px;top:290.82px" width="15" height="15" viewBox="0 0 15 15"><defs><linearGradient id="pg" x1="0" y1="0" x2="0" y2="1"><stop offset="0" stop-color="#f7f7f8"/><stop offset="0.45" stop-color="#e3e4e6"/><stop offset="0.75" stop-color="#b9bbc2"/><stop offset="1" stop-color="#6f7280"/></linearGradient></defs><rect x="3.3" y="0.6" width="8" height="4.6" fill="#f4f4f5" stroke="#c4c5c9" stroke-width="0.9"/><rect x="0.4" y="4.9" width="14.2" height="8.8" rx="1.6" fill="url(#pg)" stroke="#a9abb2" stroke-width="0.5"/><rect x="3.3" y="11" width="8" height="3.6" fill="#dedfe2" stroke="#a4a6ad" stroke-width="0.8"/><circle cx="13" cy="7.3" r="1" fill="#4fae3a"/><circle cx="13" cy="10.2" r="0.9" fill="#efa822"/></svg>
<div class="t" style="left:109.9px;top:288.92px;line-height:21.32px;color:#333;letter-spacing:0.98px;">06/04/22</div>
<div class="t num" style="right:876.8px;top:288.92px;line-height:21.32px;color:#333;letter-spacing:0.7px;">23</div>
<div class="t num" style="right:830.4px;top:288.92px;line-height:21.32px;color:#333;letter-spacing:0.7px;">32</div>
<div class="t lnk" style="left:324.5px;top:288.92px;line-height:21.32px;color:#555;letter-spacing:0.712px">Abraão Costa - Abraão Costa</div>
<div class="t" style="left:565.2px;top:288.92px;line-height:21.32px;color:#333;letter-spacing:0.74px;">94.697.256/0001-43</div>
<div class="t" style="left:694.6px;top:288.92px;line-height:21.32px;color:#333;letter-spacing:0.632px;">5101 - Venda de prod<span style="text-decoration:none;display:inline-block">...</span></div>
<div class="t num" style="right:195.7px;top:288.92px;line-height:21.32px;color:#333;letter-spacing:0.6px;">1.000,00</div>
<div class="t" style="left:960.6px;top:288.92px;line-height:21.32px;color:#333;letter-spacing:0.72px;">Emitida</div>
<div class="t" style="left:1051px;top:287.92px;line-height:21.32px;color:#333;letter-spacing:0.6px">Rejeitada</div>
<svg style="left:1108px;top:291.82px" width="16" height="16" viewBox="0 0 16 16"><circle cx="8" cy="8" r="6.7" fill="#fff" stroke="#ee2530" stroke-width="2.2"/><path d="M3.4 3.4L12.6 12.6" stroke="#ee2530" stroke-width="2.2"/></svg>
<div class="row g" style="top:309.34px;height:21.37px"></div>
<div class="vl" style="left:38.8px;top:309.34px;height:21.37px"></div>
<div class="vl" style="left:76.9px;top:309.34px;height:21.37px"></div>
<div class="vl" style="left:103.1px;top:309.34px;height:21.37px"></div>
<div class="vl" style="left:183.1px;top:309.34px;height:21.37px"></div>
<div class="vl" style="left:273.1px;top:309.34px;height:21.37px"></div>
<div class="vl" style="left:318.1px;top:309.34px;height:21.37px"></div>
<div class="vl" style="left:558px;top:309.34px;height:21.37px"></div>
<div class="vl" style="left:688.1px;top:309.34px;height:21.37px"></div>
<div class="vl" style="left:838px;top:309.34px;height:21.37px"></div>
<div class="vl" style="left:954.2px;top:309.34px;height:21.37px"></div>
<div class="vl" style="left:1044.2px;top:309.34px;height:21.37px"></div>
<svg class="cb" style="left:12px;top:313.14px" width="14" height="14" viewBox="0 0 14 14"><rect x="1" y="1" width="12" height="12" rx="2" fill="#fff" stroke="#7e7f8a" stroke-width="1.8"/></svg>
<svg style="left:42.7px;top:317.24px" width="8" height="8" viewBox="0 0 8 8"><path d="M1.3 1.5L6.7 6.5M6.7 1.5L1.3 6.5" stroke="#c0242b" stroke-width="2"/></svg>
<svg style="left:56px;top:312.74px" width="15" height="14" viewBox="0 0 15 14"><path d="M11.6 0.6L14 2.8L4.2 12.4L1.3 13.4L2.1 10.4Z" fill="#f0a43a"/><path d="M11.6 0.6L14 2.8L12.9 3.9L10.5 1.7Z" fill="#e58a22"/><path d="M2.1 10.4L4.2 12.4L1.3 13.4Z" fill="#f6dcb5"/><path d="M1.2 12.3L2.2 13.2L0.9 13.6Z" fill="#222"/><path d="M3 10.2L12.3 1.3" stroke="#f9c57a" stroke-width="0.9"/></svg>
<svg style="left:84.6px;top:312.14px" width="15" height="15" viewBox="0 0 15 15"><defs><linearGradient id="pg" x1="0" y1="0" x2="0" y2="1"><stop offset="0" stop-color="#f7f7f8"/><stop offset="0.45" stop-color="#e3e4e6"/><stop offset="0.75" stop-color="#b9bbc2"/><stop offset="1" stop-color="#6f7280"/></linearGradient></defs><rect x="3.3" y="0.6" width="8" height="4.6" fill="#f4f4f5" stroke="#c4c5c9" stroke-width="0.9"/><rect x="0.4" y="4.9" width="14.2" height="8.8" rx="1.6" fill="url(#pg)" stroke="#a9abb2" stroke-width="0.5"/><rect x="3.3" y="11" width="8" height="3.6" fill="#dedfe2" stroke="#a4a6ad" stroke-width="0.8"/><circle cx="13" cy="7.3" r="1" fill="#4fae3a"/><circle cx="13" cy="10.2" r="0.9" fill="#efa822"/></svg>
<div class="t" style="left:109.9px;top:310.24px;line-height:21.32px;color:#333;letter-spacing:0.98px;">04/04/22</div>
<div class="t num" style="right:876.8px;top:310.24px;line-height:21.32px;color:#333;letter-spacing:0.7px;">9030094</div>
<div class="t num" style="right:830.4px;top:310.24px;line-height:21.32px;color:#333;letter-spacing:0.7px;">7</div>
<div class="t lnk" style="left:324.5px;top:310.24px;line-height:21.32px;color:#555;letter-spacing:0.671px">Bobbie - Bobbie</div>
<div class="t" style="left:565.2px;top:310.24px;line-height:21.32px;color:#333;letter-spacing:0.74px;">70.210.257/0001-53</div>
<div class="t" style="left:694.6px;top:310.24px;line-height:21.32px;color:#333;letter-spacing:0.632px;">5922 - Simples fatura<span style="text-decoration:none;display:inline-block">...</span></div>
<div class="t num" style="right:195.7px;top:310.24px;line-height:21.32px;color:#333;letter-spacing:0.6px;">161,00</div>
<div class="t" style="left:960.6px;top:310.24px;line-height:21.32px;color:#333;letter-spacing:0.72px;">Emitida</div>
<div class="t" style="left:1051px;top:309.24px;line-height:21.32px;color:#333;letter-spacing:0.6px">Autorizada</div>
<svg style="left:1115.2px;top:312.54px" width="16" height="15" viewBox="0 0 16 15"><path d="M8 0.8L15.3 14.2H0.7Z" fill="#fff" stroke="#8b8b8b" stroke-width="0.8" stroke-linejoin="round"/><path d="M8 3.2L13.4 13H2.6Z" fill="#f5d21a"/><rect x="7.1" y="5.4" width="1.8" height="4.6" rx="0.6" fill="#111"/><rect x="7.1" y="10.8" width="1.8" height="1.6" fill="#111"/></svg>
<div class="row" style="top:330.66px;height:21.37px"></div>
<div class="vl" style="left:38.8px;top:330.66px;height:21.37px"></div>
<div class="vl" style="left:76.9px;top:330.66px;height:21.37px"></div>
<div class="vl" style="left:103.1px;top:330.66px;height:21.37px"></div>
<div class="vl" style="left:183.1px;top:330.66px;height:21.37px"></div>
<div class="vl" style="left:273.1px;top:330.66px;height:21.37px"></div>
<div class="vl" style="left:318.1px;top:330.66px;height:21.37px"></div>
<div class="vl" style="left:558px;top:330.66px;height:21.37px"></div>
<div class="vl" style="left:688.1px;top:330.66px;height:21.37px"></div>
<div class="vl" style="left:838px;top:330.66px;height:21.37px"></div>
<div class="vl" style="left:954.2px;top:330.66px;height:21.37px"></div>
<div class="vl" style="left:1044.2px;top:330.66px;height:21.37px"></div>
<svg class="cb" style="left:12px;top:334.46px" width="14" height="14" viewBox="0 0 14 14"><rect x="1" y="1" width="12" height="12" rx="2" fill="#fff" stroke="#7e7f8a" stroke-width="1.8"/></svg>
<svg style="left:42.7px;top:338.56px" width="8" height="8" viewBox="0 0 8 8"><path d="M1.3 1.5L6.7 6.5M6.7 1.5L1.3 6.5" stroke="#c0242b" stroke-width="2"/></svg>
<svg style="left:56px;top:334.06px" width="15" height="14" viewBox="0 0 15 14"><path d="M11.6 0.6L14 2.8L4.2 12.4L1.3 13.4L2.1 10.4Z" fill="#f0a43a"/><path d="M11.6 0.6L14 2.8L12.9 3.9L10.5 1.7Z" fill="#e58a22"/><path d="M2.1 10.4L4.2 12.4L1.3 13.4Z" fill="#f6dcb5"/><path d="M1.2 12.3L2.2 13.2L0.9 13.6Z" fill="#222"/><path d="M3 10.2L12.3 1.3" stroke="#f9c57a" stroke-width="0.9"/></svg>
<svg style="left:84.6px;top:333.46px" width="15" height="15" viewBox="0 0 15 15"><defs><linearGradient id="pg" x1="0" y1="0" x2="0" y2="1"><stop offset="0" stop-color="#f7f7f8"/><stop offset="0.45" stop-color="#e3e4e6"/><stop offset="0.75" stop-color="#b9bbc2"/><stop offset="1" stop-color="#6f7280"/></linearGradient></defs><rect x="3.3" y="0.6" width="8" height="4.6" fill="#f4f4f5" stroke="#c4c5c9" stroke-width="0.9"/><rect x="0.4" y="4.9" width="14.2" height="8.8" rx="1.6" fill="url(#pg)" stroke="#a9abb2" stroke-width="0.5"/><rect x="3.3" y="11" width="8" height="3.6" fill="#dedfe2" stroke="#a4a6ad" stroke-width="0.8"/><circle cx="13" cy="7.3" r="1" fill="#4fae3a"/><circle cx="13" cy="10.2" r="0.9" fill="#efa822"/></svg>
<div class="t strike" style="left:109.9px;top:331.56px;line-height:21.32px;color:#333;letter-spacing:0.98px;">31/03/22</div>
<div class="t num strike" style="right:876.8px;top:331.56px;line-height:21.32px;color:#333;letter-spacing:0.7px;">22</div>
<div class="t num strike" style="right:830.4px;top:331.56px;line-height:21.32px;color:#333;letter-spacing:0.7px;">32</div>
<div class="t lnk strike" style="left:324.5px;top:331.56px;line-height:21.32px;color:#555;letter-spacing:0.712px">Abraão Costa - Abraão Costa</div>
<div class="t strike" style="left:565.2px;top:331.56px;line-height:21.32px;color:#333;letter-spacing:0.74px;">94.697.256/0001-43</div>
<div class="t strike" style="left:694.6px;top:331.56px;line-height:21.32px;color:#333;letter-spacing:0.632px;">5101 - Venda de prod<span style="text-decoration:none;display:inline-block">...</span></div>
<div class="t num strike" style="right:195.7px;top:331.56px;line-height:21.32px;color:#333;letter-spacing:0.6px;">146,50</div>
<div class="t strike" style="left:960.6px;top:331.56px;line-height:21.32px;color:#333;letter-spacing:0.72px;">Cancelada</div>
<div class="t strike" style="left:1051px;top:330.56px;line-height:21.32px;color:#333;letter-spacing:0.6px">Cancelada</div>
<svg style="left:1111.5px;top:333.86px" width="16" height="15" viewBox="0 0 16 15"><path d="M8 0.8L15.3 14.2H0.7Z" fill="#fff" stroke="#8b8b8b" stroke-width="0.8" stroke-linejoin="round"/><path d="M8 3.2L13.4 13H2.6Z" fill="#f5d21a"/><rect x="7.1" y="5.4" width="1.8" height="4.6" rx="0.6" fill="#111"/><rect x="7.1" y="10.8" width="1.8" height="1.6" fill="#111"/></svg>
<div class="row g" style="top:351.98px;height:21.37px"></div>
<div class="vl" style="left:38.8px;top:351.98px;height:21.37px"></div>
<div class="vl" style="left:76.9px;top:351.98px;height:21.37px"></div>
<div class="vl" style="left:103.1px;top:351.98px;height:21.37px"></div>
<div class="vl" style="left:183.1px;top:351.98px;height:21.37px"></div>
<div class="vl" style="left:273.1px;top:351.98px;height:21.37px"></div>
<div class="vl" style="left:318.1px;top:351.98px;height:21.37px"></div>
<div class="vl" style="left:558px;top:351.98px;height:21.37px"></div>
<div class="vl" style="left:688.1px;top:351.98px;height:21.37px"></div>
<div class="vl" style="left:838px;top:351.98px;height:21.37px"></div>
<div class="vl" style="left:954.2px;top:351.98px;height:21.37px"></div>
<div class="vl" style="left:1044.2px;top:351.98px;height:21.37px"></div>
<svg class="cb" style="left:12px;top:355.78px" width="14" height="14" viewBox="0 0 14 14"><rect x="1" y="1" width="12" height="12" rx="2" fill="#fff" stroke="#7e7f8a" stroke-width="1.8"/></svg>
<svg style="left:42.7px;top:359.88px" width="8" height="8" viewBox="0 0 8 8"><path d="M1.3 1.5L6.7 6.5M6.7 1.5L1.3 6.5" stroke="#c0242b" stroke-width="2"/></svg>
<svg style="left:56px;top:355.38px" width="15" height="14" viewBox="0 0 15 14"><path d="M11.6 0.6L14 2.8L4.2 12.4L1.3 13.4L2.1 10.4Z" fill="#f0a43a"/><path d="M11.6 0.6L14 2.8L12.9 3.9L10.5 1.7Z" fill="#e58a22"/><path d="M2.1 10.4L4.2 12.4L1.3 13.4Z" fill="#f6dcb5"/><path d="M1.2 12.3L2.2 13.2L0.9 13.6Z" fill="#222"/><path d="M3 10.2L12.3 1.3" stroke="#f9c57a" stroke-width="0.9"/></svg>
<svg style="left:84.6px;top:354.78px" width="15" height="15" viewBox="0 0 15 15"><defs><linearGradient id="pg" x1="0" y1="0" x2="0" y2="1"><stop offset="0" stop-color="#f7f7f8"/><stop offset="0.45" stop-color="#e3e4e6"/><stop offset="0.75" stop-color="#b9bbc2"/><stop offset="1" stop-color="#6f7280"/></linearGradient></defs><rect x="3.3" y="0.6" width="8" height="4.6" fill="#f4f4f5" stroke="#c4c5c9" stroke-width="0.9"/><rect x="0.4" y="4.9" width="14.2" height="8.8" rx="1.6" fill="url(#pg)" stroke="#a9abb2" stroke-width="0.5"/><rect x="3.3" y="11" width="8" height="3.6" fill="#dedfe2" stroke="#a4a6ad" stroke-width="0.8"/><circle cx="13" cy="7.3" r="1" fill="#4fae3a"/><circle cx="13" cy="10.2" r="0.9" fill="#efa822"/></svg>
<div class="t" style="left:109.9px;top:352.88px;line-height:21.32px;color:#333;letter-spacing:0.98px;">31/03/22</div>
<div class="t num" style="right:876.8px;top:352.88px;line-height:21.32px;color:#333;letter-spacing:0.7px;">21</div>
<div class="t num" style="right:830.4px;top:352.88px;line-height:21.32px;color:#333;letter-spacing:0.7px;">32</div>
<div class="t lnk" style="left:324.5px;top:352.88px;line-height:21.32px;color:#555;letter-spacing:0.712px">Abraão Costa - Abraão Costa</div>
<div class="t" style="left:565.2px;top:352.88px;line-height:21.32px;color:#333;letter-spacing:0.74px;">94.697.256/0001-43</div>
<div class="t" style="left:694.6px;top:352.88px;line-height:21.32px;color:#333;letter-spacing:0.632px;">5101 - Venda de prod<span style="text-decoration:none;display:inline-block">...</span></div>
<div class="t num" style="right:195.7px;top:352.88px;line-height:21.32px;color:#333;letter-spacing:0.6px;">146,50</div>
<div class="t" style="left:960.6px;top:352.88px;line-height:21.32px;color:#333;letter-spacing:0.72px;">Emitida</div>
<div class="t" style="left:1051px;top:351.88px;line-height:21.32px;color:#333;letter-spacing:0.6px">Autorizada</div>
<svg style="left:1115.2px;top:355.18px" width="16" height="15" viewBox="0 0 16 15"><path d="M8 0.8L15.3 14.2H0.7Z" fill="#fff" stroke="#8b8b8b" stroke-width="0.8" stroke-linejoin="round"/><path d="M8 3.2L13.4 13H2.6Z" fill="#f5d21a"/><rect x="7.1" y="5.4" width="1.8" height="4.6" rx="0.6" fill="#111"/><rect x="7.1" y="10.8" width="1.8" height="1.6" fill="#111"/></svg>
<div class="row" style="top:373.3px;height:21.37px"></div>
<div class="vl" style="left:38.8px;top:373.3px;height:21.37px"></div>
<div class="vl" style="left:76.9px;top:373.3px;height:21.37px"></div>
<div class="vl" style="left:103.1px;top:373.3px;height:21.37px"></div>
<div class="vl" style="left:183.1px;top:373.3px;height:21.37px"></div>
<div class="vl" style="left:273.1px;top:373.3px;height:21.37px"></div>
<div class="vl" style="left:318.1px;top:373.3px;height:21.37px"></div>
<div class="vl" style="left:558px;top:373.3px;height:21.37px"></div>
<div class="vl" style="left:688.1px;top:373.3px;height:21.37px"></div>
<div class="vl" style="left:838px;top:373.3px;height:21.37px"></div>
<div class="vl" style="left:954.2px;top:373.3px;height:21.37px"></div>
<div class="vl" style="left:1044.2px;top:373.3px;height:21.37px"></div>
<svg class="cb" style="left:12px;top:377.1px" width="14" height="14" viewBox="0 0 14 14"><rect x="1" y="1" width="12" height="12" rx="2" fill="#fff" stroke="#7e7f8a" stroke-width="1.8"/></svg>
<svg style="left:42.7px;top:381.2px" width="8" height="8" viewBox="0 0 8 8"><path d="M1.3 1.5L6.7 6.5M6.7 1.5L1.3 6.5" stroke="#c0242b" stroke-width="2"/></svg>
<svg style="left:56px;top:376.7px" width="15" height="14" viewBox="0 0 15 14"><path d="M11.6 0.6L14 2.8L4.2 12.4L1.3 13.4L2.1 10.4Z" fill="#f0a43a"/><path d="M11.6 0.6L14 2.8L12.9 3.9L10.5 1.7Z" fill="#e58a22"/><path d="M2.1 10.4L4.2 12.4L1.3 13.4Z" fill="#f6dcb5"/><path d="M1.2 12.3L2.2 13.2L0.9 13.6Z" fill="#222"/><path d="M3 10.2L12.3 1.3" stroke="#f9c57a" stroke-width="0.9"/></svg>
<svg style="left:84.6px;top:376.1px" width="15" height="15" viewBox="0 0 15 15"><defs><linearGradient id="pg" x1="0" y1="0" x2="0" y2="1"><stop offset="0" stop-color="#f7f7f8"/><stop offset="0.45" stop-color="#e3e4e6"/><stop offset="0.75" stop-color="#b9bbc2"/><stop offset="1" stop-color="#6f7280"/></linearGradient></defs><rect x="3.3" y="0.6" width="8" height="4.6" fill="#f4f4f5" stroke="#c4c5c9" stroke-width="0.9"/><rect x="0.4" y="4.9" width="14.2" height="8.8" rx="1.6" fill="url(#pg)" stroke="#a9abb2" stroke-width="0.5"/><rect x="3.3" y="11" width="8" height="3.6" fill="#dedfe2" stroke="#a4a6ad" stroke-width="0.8"/><circle cx="13" cy="7.3" r="1" fill="#4fae3a"/><circle cx="13" cy="10.2" r="0.9" fill="#efa822"/></svg>
<div class="t" style="left:109.9px;top:374.2px;line-height:21.32px;color:#333;letter-spacing:0.98px;">29/03/22</div>
<div class="t num" style="right:876.8px;top:374.2px;line-height:21.32px;color:#333;letter-spacing:0.7px;">20</div>
<div class="t num" style="right:830.4px;top:374.2px;line-height:21.32px;color:#333;letter-spacing:0.7px;">32</div>
<div class="t lnk" style="left:324.5px;top:374.2px;line-height:21.32px;color:#555;letter-spacing:0.671px">Bobbie - Bobbie</div>
<div class="t" style="left:565.2px;top:374.2px;line-height:21.32px;color:#333;letter-spacing:0.74px;">70.210.257/0001-53</div>
<div class="t" style="left:694.6px;top:374.2px;line-height:21.32px;color:#333;letter-spacing:0.632px;">5101 - Venda de prod<span style="text-decoration:none;display:inline-block">...</span></div>
<div class="t num" style="right:195.7px;top:374.2px;line-height:21.32px;color:#333;letter-spacing:0.6px;">77,44</div>
<div class="t" style="left:960.6px;top:374.2px;line-height:21.32px;color:#333;letter-spacing:0.72px;">Emitida</div>
<div class="t" style="left:1051px;top:373.2px;line-height:21.32px;color:#333;letter-spacing:0.6px">Autorizada</div>
<svg style="left:1115.2px;top:376.5px" width="16" height="15" viewBox="0 0 16 15"><path d="M8 0.8L15.3 14.2H0.7Z" fill="#fff" stroke="#8b8b8b" stroke-width="0.8" stroke-linejoin="round"/><path d="M8 3.2L13.4 13H2.6Z" fill="#f5d21a"/><rect x="7.1" y="5.4" width="1.8" height="4.6" rx="0.6" fill="#111"/><rect x="7.1" y="10.8" width="1.8" height="1.6" fill="#111"/></svg>
<div class="row g" style="top:394.62px;height:21.37px"></div>
<div class="vl" style="left:38.8px;top:394.62px;height:21.37px"></div>
<div class="vl" style="left:76.9px;top:394.62px;height:21.37px"></div>
<div class="vl" style="left:103.1px;top:394.62px;height:21.37px"></div>
<div class="vl" style="left:183.1px;top:394.62px;height:21.37px"></div>
<div class="vl" style="left:273.1px;top:394.62px;height:21.37px"></div>
<div class="vl" style="left:318.1px;top:394.62px;height:21.37px"></div>
<div class="vl" style="left:558px;top:394.62px;height:21.37px"></div>
<div class="vl" style="left:688.1px;top:394.62px;height:21.37px"></div>
<div class="vl" style="left:838px;top:394.62px;height:21.37px"></div>
<div class="vl" style="left:954.2px;top:394.62px;height:21.37px"></div>
<div class="vl" style="left:1044.2px;top:394.62px;height:21.37px"></div>
<svg class="cb" style="left:12px;top:398.42px" width="14" height="14" viewBox="0 0 14 14"><rect x="1" y="1" width="12" height="12" rx="2" fill="#fff" stroke="#7e7f8a" stroke-width="1.8"/></svg>
<svg style="left:42.7px;top:402.52px" width="8" height="8" viewBox="0 0 8 8"><path d="M1.3 1.5L6.7 6.5M6.7 1.5L1.3 6.5" stroke="#c0242b" stroke-width="2"/></svg>
<svg style="left:56px;top:398.02px" width="15" height="14" viewBox="0 0 15 14"><path d="M11.6 0.6L14 2.8L4.2 12.4L1.3 13.4L2.1 10.4Z" fill="#f0a43a"/><path d="M11.6 0.6L14 2.8L12.9 3.9L10.5 1.7Z" fill="#e58a22"/><path d="M2.1 10.4L4.2 12.4L1.3 13.4Z" fill="#f6dcb5"/><path d="M1.2 12.3L2.2 13.2L0.9 13.6Z" fill="#222"/><path d="M3 10.2L12.3 1.3" stroke="#f9c57a" stroke-width="0.9"/></svg>
<svg style="left:84.6px;top:397.42px" width="15" height="15" viewBox="0 0 15 15"><defs><linearGradient id="pg" x1="0" y1="0" x2="0" y2="1"><stop offset="0" stop-color="#f7f7f8"/><stop offset="0.45" stop-color="#e3e4e6"/><stop offset="0.75" stop-color="#b9bbc2"/><stop offset="1" stop-color="#6f7280"/></linearGradient></defs><rect x="3.3" y="0.6" width="8" height="4.6" fill="#f4f4f5" stroke="#c4c5c9" stroke-width="0.9"/><rect x="0.4" y="4.9" width="14.2" height="8.8" rx="1.6" fill="url(#pg)" stroke="#a9abb2" stroke-width="0.5"/><rect x="3.3" y="11" width="8" height="3.6" fill="#dedfe2" stroke="#a4a6ad" stroke-width="0.8"/><circle cx="13" cy="7.3" r="1" fill="#4fae3a"/><circle cx="13" cy="10.2" r="0.9" fill="#efa822"/></svg>
<div class="t" style="left:109.9px;top:395.52px;line-height:21.32px;color:#333;letter-spacing:0.98px;">29/03/22</div>
<div class="t num" style="right:876.8px;top:395.52px;line-height:21.32px;color:#333;letter-spacing:0.7px;">19</div>
<div class="t num" style="right:830.4px;top:395.52px;line-height:21.32px;color:#333;letter-spacing:0.7px;">32</div>
<div class="t lnk" style="left:324.5px;top:395.52px;line-height:21.32px;color:#555;letter-spacing:0.712px">Abraão Costa - Abraão Costa</div>
<div class="t" style="left:565.2px;top:395.52px;line-height:21.32px;color:#333;letter-spacing:0.74px;">94.697.256/0001-43</div>
<div class="t" style="left:694.6px;top:395.52px;line-height:21.32px;color:#333;letter-spacing:0.632px;">5101 - Venda de prod<span style="text-decoration:none;display:inline-block">...</span></div>
<div class="t num" style="right:195.7px;top:395.52px;line-height:21.32px;color:#333;letter-spacing:0.6px;">19,17</div>
<div class="t" style="left:960.6px;top:395.52px;line-height:21.32px;color:#333;letter-spacing:0.72px;">Emitida</div>
<div class="t" style="left:1051px;top:394.52px;line-height:21.32px;color:#333;letter-spacing:0.6px">Autorizada</div>
<svg style="left:1115.2px;top:397.82px" width="16" height="15" viewBox="0 0 16 15"><path d="M8 0.8L15.3 14.2H0.7Z" fill="#fff" stroke="#8b8b8b" stroke-width="0.8" stroke-linejoin="round"/><path d="M8 3.2L13.4 13H2.6Z" fill="#f5d21a"/><rect x="7.1" y="5.4" width="1.8" height="4.6" rx="0.6" fill="#111"/><rect x="7.1" y="10.8" width="1.8" height="1.6" fill="#111"/></svg>
<div class="row" style="top:415.94px;height:21.37px"></div>
<div class="vl" style="left:38.8px;top:415.94px;height:21.37px"></div>
<div class="vl" style="left:76.9px;top:415.94px;height:21.37px"></div>
<div class="vl" style="left:103.1px;top:415.94px;height:21.37px"></div>
<div class="vl" style="left:183.1px;top:415.94px;height:21.37px"></div>
<div class="vl" style="left:273.1px;top:415.94px;height:21.37px"></div>
<div class="vl" style="left:318.1px;top:415.94px;height:21.37px"></div>
<div class="vl" style="left:558px;top:415.94px;height:21.37px"></div>
<div class="vl" style="left:688.1px;top:415.94px;height:21.37px"></div>
<div class="vl" style="left:838px;top:415.94px;height:21.37px"></div>
<div class="vl" style="left:954.2px;top:415.94px;height:21.37px"></div>
<div class="vl" style="left:1044.2px;top:415.94px;height:21.37px"></div>
<svg class="cb" style="left:12px;top:419.74px" width="14" height="14" viewBox="0 0 14 14"><rect x="1" y="1" width="12" height="12" rx="2" fill="#fff" stroke="#7e7f8a" stroke-width="1.8"/></svg>
<svg style="left:42.7px;top:423.84px" width="8" height="8" viewBox="0 0 8 8"><path d="M1.3 1.5L6.7 6.5M6.7 1.5L1.3 6.5" stroke="#c0242b" stroke-width="2"/></svg>
<svg style="left:56px;top:419.34px" width="15" height="14" viewBox="0 0 15 14"><path d="M11.6 0.6L14 2.8L4.2 12.4L1.3 13.4L2.1 10.4Z" fill="#f0a43a"/><path d="M11.6 0.6L14 2.8L12.9 3.9L10.5 1.7Z" fill="#e58a22"/><path d="M2.1 10.4L4.2 12.4L1.3 13.4Z" fill="#f6dcb5"/><path d="M1.2 12.3L2.2 13.2L0.9 13.6Z" fill="#222"/><path d="M3 10.2L12.3 1.3" stroke="#f9c57a" stroke-width="0.9"/></svg>
<svg style="left:84.6px;top:418.74px" width="15" height="15" viewBox="0 0 15 15"><defs><linearGradient id="pg" x1="0" y1="0" x2="0" y2="1"><stop offset="0" stop-color="#f7f7f8"/><stop offset="0.45" stop-color="#e3e4e6"/><stop offset="0.75" stop-color="#b9bbc2"/><stop offset="1" stop-color="#6f7280"/></linearGradient></defs><rect x="3.3" y="0.6" width="8" height="4.6" fill="#f4f4f5" stroke="#c4c5c9" stroke-width="0.9"/><rect x="0.4" y="4.9" width="14.2" height="8.8" rx="1.6" fill="url(#pg)" stroke="#a9abb2" stroke-width="0.5"/><rect x="3.3" y="11" width="8" height="3.6" fill="#dedfe2" stroke="#a4a6ad" stroke-width="0.8"/><circle cx="13" cy="7.3" r="1" fill="#4fae3a"/><circle cx="13" cy="10.2" r="0.9" fill="#efa822"/></svg>
<div class="t" style="left:109.9px;top:416.84px;line-height:21.32px;color:#333;letter-spacing:0.98px;">25/03/22</div>
<div class="t num" style="right:876.8px;top:416.84px;line-height:21.32px;color:#333;letter-spacing:0.7px;">17</div>
<div class="t num" style="right:830.4px;top:416.84px;line-height:21.32px;color:#333;letter-spacing:0.7px;">32</div>
<div class="t lnk" style="left:324.5px;top:416.84px;line-height:21.32px;color:#555;letter-spacing:0.671px">Bobbie - Bobbie</div>
<div class="t" style="left:565.2px;top:416.84px;line-height:21.32px;color:#333;letter-spacing:0.74px;">70.210.257/0001-53</div>
<div class="t" style="left:694.6px;top:416.84px;line-height:21.32px;color:#333;letter-spacing:0.632px;">5101 - Venda de prod<span style="text-decoration:none;display:inline-block">...</span></div>
<div class="t num" style="right:195.7px;top:416.84px;line-height:21.32px;color:#333;letter-spacing:0.6px;">10,00</div>
<div class="t" style="left:960.6px;top:416.84px;line-height:21.32px;color:#333;letter-spacing:0.72px;">Emitida</div>
<div class="t" style="left:1051px;top:415.84px;line-height:21.32px;color:#333;letter-spacing:0.6px">Autorizada</div>
<svg style="left:1115.2px;top:419.14px" width="16" height="15" viewBox="0 0 16 15"><path d="M8 0.8L15.3 14.2H0.7Z" fill="#fff" stroke="#8b8b8b" stroke-width="0.8" stroke-linejoin="round"/><path d="M8 3.2L13.4 13H2.6Z" fill="#f5d21a"/><rect x="7.1" y="5.4" width="1.8" height="4.6" rx="0.6" fill="#111"/><rect x="7.1" y="10.8" width="1.8" height="1.6" fill="#111"/></svg>
<div class="row g" style="top:437.26px;height:21.37px"></div>
<div class="vl" style="left:38.8px;top:437.26px;height:21.37px"></div>
<div class="vl" style="left:76.9px;top:437.26px;height:21.37px"></div>
<div class="vl" style="left:103.1px;top:437.26px;height:21.37px"></div>
<div class="vl" style="left:183.1px;top:437.26px;height:21.37px"></div>
<div class="vl" style="left:273.1px;top:437.26px;height:21.37px"></div>
<div class="vl" style="left:318.1px;top:437.26px;height:21.37px"></div>
<div class="vl" style="left:558px;top:437.26px;height:21.37px"></div>
<div class="vl" style="left:688.1px;top:437.26px;height:21.37px"></div>
<div class="vl" style="left:838px;top:437.26px;height:21.37px"></div>
<div class="vl" style="left:954.2px;top:437.26px;height:21.37px"></div>
<div class="vl" style="left:1044.2px;top:437.26px;height:21.37px"></div>
<svg class="cb" style="left:12px;top:441.06px" width="14" height="14" viewBox="0 0 14 14"><rect x="1" y="1" width="12" height="12" rx="2" fill="#fff" stroke="#7e7f8a" stroke-width="1.8"/></svg>
<svg style="left:42.7px;top:445.16px" width="8" height="8" viewBox="0 0 8 8"><path d="M1.3 1.5L6.7 6.5M6.7 1.5L1.3 6.5" stroke="#c0242b" stroke-width="2"/></svg>
<svg style="left:56px;top:440.66px" width="15" height="14" viewBox="0 0 15 14"><path d="M11.6 0.6L14 2.8L4.2 12.4L1.3 13.4L2.1 10.4Z" fill="#f0a43a"/><path d="M11.6 0.6L14 2.8L12.9 3.9L10.5 1.7Z" fill="#e58a22"/><path d="M2.1 10.4L4.2 12.4L1.3 13.4Z" fill="#f6dcb5"/><path d="M1.2 12.3L2.2 13.2L0.9 13.6Z" fill="#222"/><path d="M3 10.2L12.3 1.3" stroke="#f9c57a" stroke-width="0.9"/></svg>
<svg style="left:84.6px;top:440.06px" width="15" height="15" viewBox="0 0 15 15"><defs><linearGradient id="pg" x1="0" y1="0" x2="0" y2="1"><stop offset="0" stop-color="#f7f7f8"/><stop offset="0.45" stop-color="#e3e4e6"/><stop offset="0.75" stop-color="#b9bbc2"/><stop offset="1" stop-color="#6f7280"/></linearGradient></defs><rect x="3.3" y="0.6" width="8" height="4.6" fill="#f4f4f5" stroke="#c4c5c9" stroke-width="0.9"/><rect x="0.4" y="4.9" width="14.2" height="8.8" rx="1.6" fill="url(#pg)" stroke="#a9abb2" stroke-width="0.5"/><rect x="3.3" y="11" width="8" height="3.6" fill="#dedfe2" stroke="#a4a6ad" stroke-width="0.8"/><circle cx="13" cy="7.3" r="1" fill="#4fae3a"/><circle cx="13" cy="10.2" r="0.9" fill="#efa822"/></svg>
<div class="t" style="left:109.9px;top:438.16px;line-height:21.32px;color:#333;letter-spacing:0.98px;">25/03/22</div>
<div class="t num" style="right:876.8px;top:438.16px;line-height:21.32px;color:#333;letter-spacing:0.7px;">16</div>
<div class="t num" style="right:830.4px;top:438.16px;line-height:21.32px;color:#333;letter-spacing:0.7px;">32</div>
<div class="t lnk" style="left:324.5px;top:438.16px;line-height:21.32px;color:#555;letter-spacing:0.671px">Bobbie - Bobbie</div>
<div class="t" style="left:565.2px;top:438.16px;line-height:21.32px;color:#333;letter-spacing:0.74px;">70.210.257/0001-53</div>
<div class="t" style="left:694.6px;top:438.16px;line-height:21.32px;color:#333;letter-spacing:0.632px;">5101 - Venda de prod<span style="text-decoration:none;display:inline-block">...</span></div>
<div class="t num" style="right:195.7px;top:438.16px;line-height:21.32px;color:#333;letter-spacing:0.6px;">10,00</div>
<div class="t" style="left:960.6px;top:438.16px;line-height:21.32px;color:#333;letter-spacing:0.72px;">Emitida</div>
<div class="t" style="left:1051px;top:437.16px;line-height:21.32px;color:#333;letter-spacing:0.6px">Autorizada</div>
<svg style="left:1115.2px;top:440.46px" width="16" height="15" viewBox="0 0 16 15"><path d="M8 0.8L15.3 14.2H0.7Z" fill="#fff" stroke="#8b8b8b" stroke-width="0.8" stroke-linejoin="round"/><path d="M8 3.2L13.4 13H2.6Z" fill="#f5d21a"/><rect x="7.1" y="5.4" width="1.8" height="4.6" rx="0.6" fill="#111"/><rect x="7.1" y="10.8" width="1.8" height="1.6" fill="#111"/></svg>
<div class="row" style="top:458.58px;height:21.37px"></div>
<div class="vl" style="left:38.8px;top:458.58px;height:21.37px"></div>
<div class="vl" style="left:76.9px;top:458.58px;height:21.37px"></div>
<div class="vl" style="left:103.1px;top:458.58px;height:21.37px"></div>
<div class="vl" style="left:183.1px;top:458.58px;height:21.37px"></div>
<div class="vl" style="left:273.1px;top:458.58px;height:21.37px"></div>
<div class="vl" style="left:318.1px;top:458.58px;height:21.37px"></div>
<div class="vl" style="left:558px;top:458.58px;height:21.37px"></div>
<div class="vl" style="left:688.1px;top:458.58px;height:21.37px"></div>
<div class="vl" style="left:838px;top:458.58px;height:21.37px"></div>
<div class="vl" style="left:954.2px;top:458.58px;height:21.37px"></div>
<div class="vl" style="left:1044.2px;top:458.58px;height:21.37px"></div>
<svg class="cb" style="left:12px;top:462.38px" width="14" height="14" viewBox="0 0 14 14"><rect x="1" y="1" width="12" height="12" rx="2" fill="#fff" stroke="#7e7f8a" stroke-width="1.8"/></svg>
<svg style="left:42.7px;top:466.48px" width="8" height="8" viewBox="0 0 8 8"><path d="M1.3 1.5L6.7 6.5M6.7 1.5L1.3 6.5" stroke="#c0242b" stroke-width="2"/></svg>
<svg style="left:56px;top:461.98px" width="15" height="14" viewBox="0 0 15 14"><path d="M11.6 0.6L14 2.8L4.2 12.4L1.3 13.4L2.1 10.4Z" fill="#f0a43a"/><path d="M11.6 0.6L14 2.8L12.9 3.9L10.5 1.7Z" fill="#e58a22"/><path d="M2.1 10.4L4.2 12.4L1.3 13.4Z" fill="#f6dcb5"/><path d="M1.2 12.3L2.2 13.2L0.9 13.6Z" fill="#222"/><path d="M3 10.2L12.3 1.3" stroke="#f9c57a" stroke-width="0.9"/></svg>
<svg style="left:84.6px;top:461.38px" width="15" height="15" viewBox="0 0 15 15"><defs><linearGradient id="pg" x1="0" y1="0" x2="0" y2="1"><stop offset="0" stop-color="#f7f7f8"/><stop offset="0.45" stop-color="#e3e4e6"/><stop offset="0.75" stop-color="#b9bbc2"/><stop offset="1" stop-color="#6f7280"/></linearGradient></defs><rect x="3.3" y="0.6" width="8" height="4.6" fill="#f4f4f5" stroke="#c4c5c9" stroke-width="0.9"/><rect x="0.4" y="4.9" width="14.2" height="8.8" rx="1.6" fill="url(#pg)" stroke="#a9abb2" stroke-width="0.5"/><rect x="3.3" y="11" width="8" height="3.6" fill="#dedfe2" stroke="#a4a6ad" stroke-width="0.8"/><circle cx="13" cy="7.3" r="1" fill="#4fae3a"/><circle cx="13" cy="10.2" r="0.9" fill="#efa822"/></svg>
<div class="t" style="left:109.9px;top:459.48px;line-height:21.32px;color:#333;letter-spacing:0.98px;">25/03/22</div>
<div class="t num" style="right:876.8px;top:459.48px;line-height:21.32px;color:#333;letter-spacing:0.7px;">15</div>
<div class="t num" style="right:830.4px;top:459.48px;line-height:21.32px;color:#333;letter-spacing:0.7px;">32</div>
<div class="t lnk" style="left:324.5px;top:459.48px;line-height:21.32px;color:#555;letter-spacing:0.671px">Bobbie - Bobbie</div>
<div class="t" style="left:565.2px;top:459.48px;line-height:21.32px;color:#333;letter-spacing:0.74px;">70.210.257/0001-53</div>
<div class="t" style="left:694.6px;top:459.48px;line-height:21.32px;color:#333;letter-spacing:0.632px;">5101 - Venda de prod<span style="text-decoration:none;display:inline-block">...</span></div>
<div class="t num" style="right:195.7px;top:459.48px;line-height:21.32px;color:#333;letter-spacing:0.6px;">10,00</div>
<div class="t" style="left:960.6px;top:459.48px;line-height:21.32px;color:#333;letter-spacing:0.72px;">Emitida</div>
<div class="t" style="left:1051px;top:458.48px;line-height:21.32px;color:#333;letter-spacing:0.6px">Autorizada</div>
<svg style="left:1115.2px;top:461.78px" width="16" height="15" viewBox="0 0 16 15"><path d="M8 0.8L15.3 14.2H0.7Z" fill="#fff" stroke="#8b8b8b" stroke-width="0.8" stroke-linejoin="round"/><path d="M8 3.2L13.4 13H2.6Z" fill="#f5d21a"/><rect x="7.1" y="5.4" width="1.8" height="4.6" rx="0.6" fill="#111"/><rect x="7.1" y="10.8" width="1.8" height="1.6" fill="#111"/></svg>
<div class="row g" style="top:479.9px;height:21.37px"></div>
<div class="vl" style="left:38.8px;top:479.9px;height:21.37px"></div>
<div class="vl" style="left:76.9px;top:479.9px;height:21.37px"></div>
<div class="vl" style="left:103.1px;top:479.9px;height:21.37px"></div>
<div class="vl" style="left:183.1px;top:479.9px;height:21.37px"></div>
<div class="vl" style="left:273.1px;top:479.9px;height:21.37px"></div>
<div class="vl" style="left:318.1px;top:479.9px;height:21.37px"></div>
<div class="vl" style="left:558px;top:479.9px;height:21.37px"></div>
<div class="vl" style="left:688.1px;top:479.9px;height:21.37px"></div>
<div class="vl" style="left:838px;top:479.9px;height:21.37px"></div>
<div class="vl" style="left:954.2px;top:479.9px;height:21.37px"></div>
<div class="vl" style="left:1044.2px;top:479.9px;height:21.37px"></div>
<svg class="cb" style="left:12px;top:483.7px" width="14" height="14" viewBox="0 0 14 14"><rect x="1" y="1" width="12" height="12" rx="2" fill="#fff" stroke="#7e7f8a" stroke-width="1.8"/></svg>
<svg style="left:42.7px;top:487.8px" width="8" height="8" viewBox="0 0 8 8"><path d="M1.3 1.5L6.7 6.5M6.7 1.5L1.3 6.5" stroke="#c0242b" stroke-width="2"/></svg>
<svg style="left:56px;top:483.3px" width="15" height="14" viewBox="0 0 15 14"><path d="M11.6 0.6L14 2.8L4.2 12.4L1.3 13.4L2.1 10.4Z" fill="#f0a43a"/><path d="M11.6 0.6L14 2.8L12.9 3.9L10.5 1.7Z" fill="#e58a22"/><path d="M2.1 10.4L4.2 12.4L1.3 13.4Z" fill="#f6dcb5"/><path d="M1.2 12.3L2.2 13.2L0.9 13.6Z" fill="#222"/><path d="M3 10.2L12.3 1.3" stroke="#f9c57a" stroke-width="0.9"/></svg>
<svg style="left:84.6px;top:482.7px" width="15" height="15" viewBox="0 0 15 15"><defs><linearGradient id="pg" x1="0" y1="0" x2="0" y2="1"><stop offset="0" stop-color="#f7f7f8"/><stop offset="0.45" stop-color="#e3e4e6"/><stop offset="0.75" stop-color="#b9bbc2"/><stop offset="1" stop-color="#6f7280"/></linearGradient></defs><rect x="3.3" y="0.6" width="8" height="4.6" fill="#f4f4f5" stroke="#c4c5c9" stroke-width="0.9"/><rect x="0.4" y="4.9" width="14.2" height="8.8" rx="1.6" fill="url(#pg)" stroke="#a9abb2" stroke-width="0.5"/><rect x="3.3" y="11" width="8" height="3.6" fill="#dedfe2" stroke="#a4a6ad" stroke-width="0.8"/><circle cx="13" cy="7.3" r="1" fill="#4fae3a"/><circle cx="13" cy="10.2" r="0.9" fill="#efa822"/></svg>
<div class="t" style="left:109.9px;top:480.8px;line-height:21.32px;color:#333;letter-spacing:0.98px;">25/03/22</div>
<div class="t num" style="right:876.8px;top:480.8px;line-height:21.32px;color:#333;letter-spacing:0.7px;">14</div>
<div class="t num" style="right:830.4px;top:480.8px;line-height:21.32px;color:#333;letter-spacing:0.7px;">32</div>
<div class="t lnk" style="left:324.5px;top:480.8px;line-height:21.32px;color:#555;letter-spacing:0.671px">Bobbie - Bobbie</div>
<div class="t" style="left:565.2px;top:480.8px;line-height:21.32px;color:#333;letter-spacing:0.74px;">70.210.257/0001-53</div>
<div class="t" style="left:694.6px;top:480.8px;line-height:21.32px;color:#333;letter-spacing:0.632px;">5101 - Venda de prod<span style="text-decoration:none;display:inline-block">...</span></div>
<div class="t num" style="right:195.7px;top:480.8px;line-height:21.32px;color:#333;letter-spacing:0.6px;">13,20</div>
<div class="t" style="left:960.6px;top:480.8px;line-height:21.32px;color:#333;letter-spacing:0.72px;">Emitida</div>
<div class="row" style="top:501.22px;height:21.37px"></div>
<div class="vl" style="left:38.8px;top:501.22px;height:21.37px"></div>
<div class="vl" style="left:76.9px;top:501.22px;height:21.37px"></div>
<div class="vl" style="left:103.1px;top:501.22px;height:21.37px"></div>
<div class="vl" style="left:183.1px;top:501.22px;height:21.37px"></div>
<div class="vl" style="left:273.1px;top:501.22px;height:21.37px"></div>
<div class="vl" style="left:318.1px;top:501.22px;height:21.37px"></div>
<div class="vl" style="left:558px;top:501.22px;height:21.37px"></div>
<div class="vl" style="left:688.1px;top:501.22px;height:21.37px"></div>
<div class="vl" style="left:838px;top:501.22px;height:21.37px"></div>
<div class="vl" style="left:954.2px;top:501.22px;height:21.37px"></div>
<div class="vl" style="left:1044.2px;top:501.22px;height:21.37px"></div>
<svg class="cb" style="left:12px;top:505.02px" width="14" height="14" viewBox="0 0 14 14"><rect x="1" y="1" width="12" height="12" rx="2" fill="#fff" stroke="#7e7f8a" stroke-width="1.8"/></svg>
<svg style="left:42.7px;top:509.12px" width="8" height="8" viewBox="0 0 8 8"><path d="M1.3 1.5L6.7 6.5M6.7 1.5L1.3 6.5" stroke="#c0242b" stroke-width="2"/></svg>
<svg style="left:56px;top:504.62px" width="15" height="14" viewBox="0 0 15 14"><path d="M11.6 0.6L14 2.8L4.2 12.4L1.3 13.4L2.1 10.4Z" fill="#f0a43a"/><path d="M11.6 0.6L14 2.8L12.9 3.9L10.5 1.7Z" fill="#e58a22"/><path d="M2.1 10.4L4.2 12.4L1.3 13.4Z" fill="#f6dcb5"/><path d="M1.2 12.3L2.2 13.2L0.9 13.6Z" fill="#222"/><path d="M3 10.2L12.3 1.3" stroke="#f9c57a" stroke-width="0.9"/></svg>
<svg style="left:84.6px;top:504.02px" width="15" height="15" viewBox="0 0 15 15"><defs><linearGradient id="pg" x1="0" y1="0" x2="0" y2="1"><stop offset="0" stop-color="#f7f7f8"/><stop offset="0.45" stop-color="#e3e4e6"/><stop offset="0.75" stop-color="#b9bbc2"/><stop offset="1" stop-color="#6f7280"/></linearGradient></defs><rect x="3.3" y="0.6" width="8" height="4.6" fill="#f4f4f5" stroke="#c4c5c9" stroke-width="0.9"/><rect x="0.4" y="4.9" width="14.2" height="8.8" rx="1.6" fill="url(#pg)" stroke="#a9abb2" stroke-width="0.5"/><rect x="3.3" y="11" width="8" height="3.6" fill="#dedfe2" stroke="#a4a6ad" stroke-width="0.8"/><circle cx="13" cy="7.3" r="1" fill="#4fae3a"/><circle cx="13" cy="10.2" r="0.9" fill="#efa822"/></svg>
<div class="t" style="left:109.9px;top:502.12px;line-height:21.32px;color:#333;letter-spacing:0.98px;">25/03/22</div>
<div class="t num" style="right:876.8px;top:502.12px;line-height:21.32px;color:#333;letter-spacing:0.7px;">13</div>
<div class="t num" style="right:830.4px;top:502.12px;line-height:21.32px;color:#333;letter-spacing:0.7px;">32</div>
<div class="t lnk" style="left:324.5px;top:502.12px;line-height:21.32px;color:#555;letter-spacing:0.671px">Bobbie - Bobbie</div>
<div class="t" style="left:565.2px;top:502.12px;line-height:21.32px;color:#333;letter-spacing:0.74px;">70.210.257/0001-53</div>
<div class="t" style="left:694.6px;top:502.12px;line-height:21.32px;color:#333;letter-spacing:0.632px;">5101 - Venda de prod<span style="text-decoration:none;display:inline-block">...</span></div>
<div class="t num" style="right:195.7px;top:502.12px;line-height:21.32px;color:#333;letter-spacing:0.6px;">1,32</div>
<div class="t" style="left:960.6px;top:502.12px;line-height:21.32px;color:#333;letter-spacing:0.72px;">Emitida</div>
<div class="t" style="left:1051px;top:501.12px;line-height:21.32px;color:#333;letter-spacing:0.6px">Autorizada</div>
<svg style="left:1115.2px;top:504.42px" width="16" height="15" viewBox="0 0 16 15"><path d="M8 0.8L15.3 14.2H0.7Z" fill="#fff" stroke="#8b8b8b" stroke-width="0.8" stroke-linejoin="round"/><path d="M8 3.2L13.4 13H2.6Z" fill="#f5d21a"/><rect x="7.1" y="5.4" width="1.8" height="4.6" rx="0.6" fill="#111"/><rect x="7.1" y="10.8" width="1.8" height="1.6" fill="#111"/></svg>
<div class="row g" style="top:522.54px;height:21.37px"></div>
<div class="vl" style="left:38.8px;top:522.54px;height:21.37px"></div>
<div class="vl" style="left:76.9px;top:522.54px;height:21.37px"></div>
<div class="vl" style="left:103.1px;top:522.54px;height:21.37px"></div>
<div class="vl" style="left:183.1px;top:522.54px;height:21.37px"></div>
<div class="vl" style="left:273.1px;top:522.54px;height:21.37px"></div>
<div class="vl" style="left:318.1px;top:522.54px;height:21.37px"></div>
<div class="vl" style="left:558px;top:522.54px;height:21.37px"></div>
<div class="vl" style="left:688.1px;top:522.54px;height:21.37px"></div>
<div class="vl" style="left:838px;top:522.54px;height:21.37px"></div>
<div class="vl" style="left:954.2px;top:522.54px;height:21.37px"></div>
<div class="vl" style="left:1044.2px;top:522.54px;height:21.37px"></div>
<svg class="cb" style="left:12px;top:526.34px" width="14" height="14" viewBox="0 0 14 14"><rect x="1" y="1" width="12" height="12" rx="2" fill="#fff" stroke="#7e7f8a" stroke-width="1.8"/></svg>
<svg style="left:42.7px;top:530.44px" width="8" height="8" viewBox="0 0 8 8"><path d="M1.3 1.5L6.7 6.5M6.7 1.5L1.3 6.5" stroke="#c0242b" stroke-width="2"/></svg>
<svg style="left:56px;top:525.94px" width="15" height="14" viewBox="0 0 15 14"><path d="M11.6 0.6L14 2.8L4.2 12.4L1.3 13.4L2.1 10.4Z" fill="#f0a43a"/><path d="M11.6 0.6L14 2.8L12.9 3.9L10.5 1.7Z" fill="#e58a22"/><path d="M2.1 10.4L4.2 12.4L1.3 13.4Z" fill="#f6dcb5"/><path d="M1.2 12.3L2.2 13.2L0.9 13.6Z" fill="#222"/><path d="M3 10.2L12.3 1.3" stroke="#f9c57a" stroke-width="0.9"/></svg>
<svg style="left:84.6px;top:525.34px" width="15" height="15" viewBox="0 0 15 15"><defs><linearGradient id="pg" x1="0" y1="0" x2="0" y2="1"><stop offset="0" stop-color="#f7f7f8"/><stop offset="0.45" stop-color="#e3e4e6"/><stop offset="0.75" stop-color="#b9bbc2"/><stop offset="1" stop-color="#6f7280"/></linearGradient></defs><rect x="3.3" y="0.6" width="8" height="4.6" fill="#f4f4f5" stroke="#c4c5c9" stroke-width="0.9"/><rect x="0.4" y="4.9" width="14.2" height="8.8" rx="1.6" fill="url(#pg)" stroke="#a9abb2" stroke-width="0.5"/><rect x="3.3" y="11" width="8" height="3.6" fill="#dedfe2" stroke="#a4a6ad" stroke-width="0.8"/><circle cx="13" cy="7.3" r="1" fill="#4fae3a"/><circle cx="13" cy="10.2" r="0.9" fill="#efa822"/></svg>
<div class="t" style="left:109.9px;top:523.44px;line-height:21.32px;color:#333;letter-spacing:0.98px;">24/03/22</div>
<div class="t num" style="right:876.8px;top:523.44px;line-height:21.32px;color:#333;letter-spacing:0.7px;">12</div>
<div class="t num" style="right:830.4px;top:523.44px;line-height:21.32px;color:#333;letter-spacing:0.7px;">32</div>
<div class="t lnk" style="left:324.5px;top:523.44px;line-height:21.32px;color:#555;letter-spacing:0.407px">USINA FORTALEZA INDUSTRIA E CO<span style="text-decoration:none;display:inline-block">...</span></div>
<div class="t" style="left:565.2px;top:523.44px;line-height:21.32px;color:#333;letter-spacing:0.74px;">44.893.410/0023-90</div>
<div class="t" style="left:694.6px;top:523.44px;line-height:21.32px;color:#333;letter-spacing:0.632px;">5201 - Devolução de <span style="text-decoration:none;display:inline-block">...</span></div>
<div class="t num" style="right:195.7px;top:523.44px;line-height:21.32px;color:#333;letter-spacing:0.6px;">957,40</div>
<div class="t" style="left:960.6px;top:523.44px;line-height:21.32px;color:#333;letter-spacing:0.72px;">Emitida</div>
<div class="t" style="left:1051px;top:522.44px;line-height:21.32px;color:#333;letter-spacing:0.6px">Rejeitada</div>
<svg style="left:1108px;top:526.34px" width="16" height="16" viewBox="0 0 16 16"><circle cx="8" cy="8" r="6.7" fill="#fff" stroke="#ee2530" stroke-width="2.2"/><path d="M3.4 3.4L12.6 12.6" stroke="#ee2530" stroke-width="2.2"/></svg>
<div class="row" style="top:543.86px;height:21.37px"></div>
<div class="vl" style="left:38.8px;top:543.86px;height:21.37px"></div>
<div class="vl" style="left:76.9px;top:543.86px;height:21.37px"></div>
<div class="vl" style="left:103.1px;top:543.86px;height:21.37px"></div>
<div class="vl" style="left:183.1px;top:543.86px;height:21.37px"></div>
<div class="vl" style="left:273.1px;top:543.86px;height:21.37px"></div>
<div class="vl" style="left:318.1px;top:543.86px;height:21.37px"></div>
<div class="vl" style="left:558px;top:543.86px;height:21.37px"></div>
<div class="vl" style="left:688.1px;top:543.86px;height:21.37px"></div>
<div class="vl" style="left:838px;top:543.86px;height:21.37px"></div>
<div class="vl" style="left:954.2px;top:543.86px;height:21.37px"></div>
<div class="vl" style="left:1044.2px;top:543.86px;height:21.37px"></div>
<svg class="cb" style="left:12px;top:547.66px" width="14" height="14" viewBox="0 0 14 14"><rect x="1" y="1" width="12" height="12" rx="2" fill="#fff" stroke="#7e7f8a" stroke-width="1.8"/></svg>
<svg style="left:42.7px;top:551.76px" width="8" height="8" viewBox="0 0 8 8"><path d="M1.3 1.5L6.7 6.5M6.7 1.5L1.3 6.5" stroke="#c0242b" stroke-width="2"/></svg>
<svg style="left:56px;top:547.26px" width="15" height="14" viewBox="0 0 15 14"><path d="M11.6 0.6L14 2.8L4.2 12.4L1.3 13.4L2.1 10.4Z" fill="#f0a43a"/><path d="M11.6 0.6L14 2.8L12.9 3.9L10.5 1.7Z" fill="#e58a22"/><path d="M2.1 10.4L4.2 12.4L1.3 13.4Z" fill="#f6dcb5"/><path d="M1.2 12.3L2.2 13.2L0.9 13.6Z" fill="#222"/><path d="M3 10.2L12.3 1.3" stroke="#f9c57a" stroke-width="0.9"/></svg>
<svg style="left:84.6px;top:546.66px" width="15" height="15" viewBox="0 0 15 15"><defs><linearGradient id="pg" x1="0" y1="0" x2="0" y2="1"><stop offset="0" stop-color="#f7f7f8"/><stop offset="0.45" stop-color="#e3e4e6"/><stop offset="0.75" stop-color="#b9bbc2"/><stop offset="1" stop-color="#6f7280"/></linearGradient></defs><rect x="3.3" y="0.6" width="8" height="4.6" fill="#f4f4f5" stroke="#c4c5c9" stroke-width="0.9"/><rect x="0.4" y="4.9" width="14.2" height="8.8" rx="1.6" fill="url(#pg)" stroke="#a9abb2" stroke-width="0.5"/><rect x="3.3" y="11" width="8" height="3.6" fill="#dedfe2" stroke="#a4a6ad" stroke-width="0.8"/><circle cx="13" cy="7.3" r="1" fill="#4fae3a"/><circle cx="13" cy="10.2" r="0.9" fill="#efa822"/></svg>
<div class="t" style="left:109.9px;top:544.76px;line-height:21.32px;color:#333;letter-spacing:0.98px;">23/03/22</div>
<div class="t num" style="right:876.8px;top:544.76px;line-height:21.32px;color:#333;letter-spacing:0.7px;">11</div>
<div class="t num" style="right:830.4px;top:544.76px;line-height:21.32px;color:#333;letter-spacing:0.7px;">32</div>
<div class="t lnk" style="left:324.5px;top:544.76px;line-height:21.32px;color:#555;letter-spacing:0.671px">Bobbie - Bobbie</div>
<div class="t" style="left:565.2px;top:544.76px;line-height:21.32px;color:#333;letter-spacing:0.74px;">70.210.257/0001-53</div>
<div class="t" style="left:694.6px;top:544.76px;line-height:21.32px;color:#333;letter-spacing:0.632px;">5101 - Venda de prod<span style="text-decoration:none;display:inline-block">...</span></div>
<div class="t num" style="right:195.7px;top:544.76px;line-height:21.32px;color:#333;letter-spacing:0.6px;">132,00</div>
<div class="t" style="left:960.6px;top:544.76px;line-height:21.32px;color:#333;letter-spacing:0.72px;">Emitida</div>
<div class="t" style="left:1051px;top:543.76px;line-height:21.32px;color:#333;letter-spacing:0.6px">Autorizada</div>
<svg style="left:1115.2px;top:547.06px" width="16" height="15" viewBox="0 0 16 15"><path d="M8 0.8L15.3 14.2H0.7Z" fill="#fff" stroke="#8b8b8b" stroke-width="0.8" stroke-linejoin="round"/><path d="M8 3.2L13.4 13H2.6Z" fill="#f5d21a"/><rect x="7.1" y="5.4" width="1.8" height="4.6" rx="0.6" fill="#111"/><rect x="7.1" y="10.8" width="1.8" height="1.6" fill="#111"/></svg>
<div class="row g" style="top:565.18px;height:21.37px"></div>
<div class="vl" style="left:38.8px;top:565.18px;height:21.37px"></div>
<div class="vl" style="left:76.9px;top:565.18px;height:21.37px"></div>
<div class="vl" style="left:103.1px;top:565.18px;height:21.37px"></div>
<div class="vl" style="left:183.1px;top:565.18px;height:21.37px"></div>
<div class="vl" style="left:273.1px;top:565.18px;height:21.37px"></div>
<div class="vl" style="left:318.1px;top:565.18px;height:21.37px"></div>
<div class="vl" style="left:558px;top:565.18px;height:21.37px"></div>
<div class="vl" style="left:688.1px;top:565.18px;height:21.37px"></div>
<div class="vl" style="left:838px;top:565.18px;height:21.37px"></div>
<div class="vl" style="left:954.2px;top:565.18px;height:21.37px"></div>
<div class="vl" style="left:1044.2px;top:565.18px;height:21.37px"></div>
<svg class="cb" style="left:12px;top:568.98px" width="14" height="14" viewBox="0 0 14 14"><rect x="1" y="1" width="12" height="12" rx="2" fill="#fff" stroke="#7e7f8a" stroke-width="1.8"/></svg>
<svg style="left:42.7px;top:573.08px" width="8" height="8" viewBox="0 0 8 8"><path d="M1.3 1.5L6.7 6.5M6.7 1.5L1.3 6.5" stroke="#c0242b" stroke-width="2"/></svg>
<svg style="left:56px;top:568.58px" width="15" height="14" viewBox="0 0 15 14"><path d="M11.6 0.6L14 2.8L4.2 12.4L1.3 13.4L2.1 10.4Z" fill="#f0a43a"/><path d="M11.6 0.6L14 2.8L12.9 3.9L10.5 1.7Z" fill="#e58a22"/><path d="M2.1 10.4L4.2 12.4L1.3 13.4Z" fill="#f6dcb5"/><path d="M1.2 12.3L2.2 13.2L0.9 13.6Z" fill="#222"/><path d="M3 10.2L12.3 1.3" stroke="#f9c57a" stroke-width="0.9"/></svg>
<svg style="left:84.6px;top:567.98px" width="15" height="15" viewBox="0 0 15 15"><defs><linearGradient id="pg" x1="0" y1="0" x2="0" y2="1"><stop offset="0" stop-color="#f7f7f8"/><stop offset="0.45" stop-color="#e3e4e6"/><stop offset="0.75" stop-color="#b9bbc2"/><stop offset="1" stop-color="#6f7280"/></linearGradient></defs><rect x="3.3" y="0.6" width="8" height="4.6" fill="#f4f4f5" stroke="#c4c5c9" stroke-width="0.9"/><rect x="0.4" y="4.9" width="14.2" height="8.8" rx="1.6" fill="url(#pg)" stroke="#a9abb2" stroke-width="0.5"/><rect x="3.3" y="11" width="8" height="3.6" fill="#dedfe2" stroke="#a4a6ad" stroke-width="0.8"/><circle cx="13" cy="7.3" r="1" fill="#4fae3a"/><circle cx="13" cy="10.2" r="0.9" fill="#efa822"/></svg>
<div class="t" style="left:109.9px;top:566.08px;line-height:21.32px;color:#333;letter-spacing:0.98px;">22/03/22</div>
<div class="t num" style="right:876.8px;top:566.08px;line-height:21.32px;color:#333;letter-spacing:0.7px;">9030093</div>
<div class="t num" style="right:830.4px;top:566.08px;line-height:21.32px;color:#333;letter-spacing:0.7px;">7</div>
<div class="t lnk" style="left:324.5px;top:566.08px;line-height:21.32px;color:#555;letter-spacing:0.671px">Bobbie - Bobbie</div>
<div class="t" style="left:565.2px;top:566.08px;line-height:21.32px;color:#333;letter-spacing:0.74px;">70.210.257/0001-53</div>
<div class="t" style="left:694.6px;top:566.08px;line-height:21.32px;color:#333;letter-spacing:0.632px;">5101 - Venda de prod<span style="text-decoration:none;display:inline-block">...</span></div>
<div class="t num" style="right:195.7px;top:566.08px;line-height:21.32px;color:#333;letter-spacing:0.6px;">9.602,00</div>
<div class="t" style="left:960.6px;top:566.08px;line-height:21.32px;color:#333;letter-spacing:0.72px;">Emitida</div>
<div class="t" style="left:1051px;top:565.08px;line-height:21.32px;color:#333;letter-spacing:0.6px">Rejeitada</div>
<svg style="left:1108px;top:568.98px" width="16" height="16" viewBox="0 0 16 16"><circle cx="8" cy="8" r="6.7" fill="#fff" stroke="#ee2530" stroke-width="2.2"/><path d="M3.4 3.4L12.6 12.6" stroke="#ee2530" stroke-width="2.2"/></svg>
<div class="row" style="top:586.5px;height:21.37px"></div>
<div class="vl" style="left:38.8px;top:586.5px;height:21.37px"></div>
<div class="vl" style="left:76.9px;top:586.5px;height:21.37px"></div>
<div class="vl" style="left:103.1px;top:586.5px;height:21.37px"></div>
<div class="vl" style="left:183.1px;top:586.5px;height:21.37px"></div>
<div class="vl" style="left:273.1px;top:586.5px;height:21.37px"></div>
<div class="vl" style="left:318.1px;top:586.5px;height:21.37px"></div>
<div class="vl" style="left:558px;top:586.5px;height:21.37px"></div>
<div class="vl" style="left:688.1px;top:586.5px;height:21.37px"></div>
<div class="vl" style="left:838px;top:586.5px;height:21.37px"></div>
<div class="vl" style="left:954.2px;top:586.5px;height:21.37px"></div>
<div class="vl" style="left:1044.2px;top:586.5px;height:21.37px"></div>
<svg class="cb" style="left:12px;top:590.3px" width="14" height="14" viewBox="0 0 14 14"><rect x="1" y="1" width="12" height="12" rx="2" fill="#fff" stroke="#7e7f8a" stroke-width="1.8"/></svg>
<svg style="left:42.7px;top:594.4px" width="8" height="8" viewBox="0 0 8 8"><path d="M1.3 1.5L6.7 6.5M6.7 1.5L1.3 6.5" stroke="#c0242b" stroke-width="2"/></svg>
<svg style="left:56px;top:589.9px" width="15" height="14" viewBox="0 0 15 14"><path d="M11.6 0.6L14 2.8L4.2 12.4L1.3 13.4L2.1 10.4Z" fill="#f0a43a"/><path d="M11.6 0.6L14 2.8L12.9 3.9L10.5 1.7Z" fill="#e58a22"/><path d="M2.1 10.4L4.2 12.4L1.3 13.4Z" fill="#f6dcb5"/><path d="M1.2 12.3L2.2 13.2L0.9 13.6Z" fill="#222"/><path d="M3 10.2L12.3 1.3" stroke="#f9c57a" stroke-width="0.9"/></svg>
<svg style="left:84.6px;top:589.3px" width="15" height="15" viewBox="0 0 15 15"><defs><linearGradient id="pg" x1="0" y1="0" x2="0" y2="1"><stop offset="0" stop-color="#f7f7f8"/><stop offset="0.45" stop-color="#e3e4e6"/><stop offset="0.75" stop-color="#b9bbc2"/><stop offset="1" stop-color="#6f7280"/></linearGradient></defs><rect x="3.3" y="0.6" width="8" height="4.6" fill="#f4f4f5" stroke="#c4c5c9" stroke-width="0.9"/><rect x="0.4" y="4.9" width="14.2" height="8.8" rx="1.6" fill="url(#pg)" stroke="#a9abb2" stroke-width="0.5"/><rect x="3.3" y="11" width="8" height="3.6" fill="#dedfe2" stroke="#a4a6ad" stroke-width="0.8"/><circle cx="13" cy="7.3" r="1" fill="#4fae3a"/><circle cx="13" cy="10.2" r="0.9" fill="#efa822"/></svg>
<div class="t" style="left:109.9px;top:587.4px;line-height:21.32px;color:#333;letter-spacing:0.98px;">16/03/22</div>
<div class="t num" style="right:876.8px;top:587.4px;line-height:21.32px;color:#333;letter-spacing:0.7px;">7</div>
<div class="t num" style="right:830.4px;top:587.4px;line-height:21.32px;color:#333;letter-spacing:0.7px;">32</div>
<div class="t lnk" style="left:324.5px;top:587.4px;line-height:21.32px;color:#555;letter-spacing:0.671px">Bobbie - Bobbie</div>
<div class="t" style="left:565.2px;top:587.4px;line-height:21.32px;color:#333;letter-spacing:0.74px;">70.210.257/0001-53</div>
<div class="t" style="left:694.6px;top:587.4px;line-height:21.32px;color:#333;letter-spacing:0.632px;">5101 - Venda de prod<span style="text-decoration:none;display:inline-block">...</span></div>
<div class="t num" style="right:195.7px;top:587.4px;line-height:21.32px;color:#333;letter-spacing:0.6px;">22,50</div>
<div class="t" style="left:960.6px;top:587.4px;line-height:21.32px;color:#333;letter-spacing:0.72px;">Emitida</div>
<div class="t" style="left:1051px;top:586.4px;line-height:21.32px;color:#333;letter-spacing:0.6px">Autorizada</div>
<svg style="left:1115.2px;top:589.7px" width="16" height="15" viewBox="0 0 16 15"><path d="M8 0.8L15.3 14.2H0.7Z" fill="#fff" stroke="#8b8b8b" stroke-width="0.8" stroke-linejoin="round"/><path d="M8 3.2L13.4 13H2.6Z" fill="#f5d21a"/><rect x="7.1" y="5.4" width="1.8" height="4.6" rx="0.6" fill="#111"/><rect x="7.1" y="10.8" width="1.8" height="1.6" fill="#111"/></svg>
<div class="row g" style="top:607.82px;height:21.37px"></div>
<div class="vl" style="left:38.8px;top:607.82px;height:21.37px"></div>
<div class="vl" style="left:76.9px;top:607.82px;height:21.37px"></div>
<div class="vl" style="left:103.1px;top:607.82px;height:21.37px"></div>
<div class="vl" style="left:183.1px;top:607.82px;height:21.37px"></div>
<div class="vl" style="left:273.1px;top:607.82px;height:21.37px"></div>
<div class="vl" style="left:318.1px;top:607.82px;height:21.37px"></div>
<div class="vl" style="left:558px;top:607.82px;height:21.37px"></div>
<div class="vl" style="left:688.1px;top:607.82px;height:21.37px"></div>
<div class="vl" style="left:838px;top:607.82px;height:21.37px"></div>
<div class="vl" style="left:954.2px;top:607.82px;height:21.37px"></div>
<div class="vl" style="left:1044.2px;top:607.82px;height:21.37px"></div>
<svg class="cb" style="left:12px;top:611.62px" width="14" height="14" viewBox="0 0 14 14"><rect x="1" y="1" width="12" height="12" rx="2" fill="#fff" stroke="#7e7f8a" stroke-width="1.8"/></svg>
<svg style="left:42.7px;top:615.72px" width="8" height="8" viewBox="0 0 8 8"><path d="M1.3 1.5L6.7 6.5M6.7 1.5L1.3 6.5" stroke="#c0242b" stroke-width="2"/></svg>
<svg style="left:56px;top:611.22px" width="15" height="14" viewBox="0 0 15 14"><path d="M11.6 0.6L14 2.8L4.2 12.4L1.3 13.4L2.1 10.4Z" fill="#f0a43a"/><path d="M11.6 0.6L14 2.8L12.9 3.9L10.5 1.7Z" fill="#e58a22"/><path d="M2.1 10.4L4.2 12.4L1.3 13.4Z" fill="#f6dcb5"/><path d="M1.2 12.3L2.2 13.2L0.9 13.6Z" fill="#222"/><path d="M3 10.2L12.3 1.3" stroke="#f9c57a" stroke-width="0.9"/></svg>
<svg style="left:84.6px;top:610.62px" width="15" height="15" viewBox="0 0 15 15"><defs><linearGradient id="pg" x1="0" y1="0" x2="0" y2="1"><stop offset="0" stop-color="#f7f7f8"/><stop offset="0.45" stop-color="#e3e4e6"/><stop offset="0.75" stop-color="#b9bbc2"/><stop offset="1" stop-color="#6f7280"/></linearGradient></defs><rect x="3.3" y="0.6" width="8" height="4.6" fill="#f4f4f5" stroke="#c4c5c9" stroke-width="0.9"/><rect x="0.4" y="4.9" width="14.2" height="8.8" rx="1.6" fill="url(#pg)" stroke="#a9abb2" stroke-width="0.5"/><rect x="3.3" y="11" width="8" height="3.6" fill="#dedfe2" stroke="#a4a6ad" stroke-width="0.8"/><circle cx="13" cy="7.3" r="1" fill="#4fae3a"/><circle cx="13" cy="10.2" r="0.9" fill="#efa822"/></svg>
<div class="t" style="left:109.9px;top:608.72px;line-height:21.32px;color:#333;letter-spacing:0.98px;">14/03/22</div>
<div class="t num" style="right:876.8px;top:608.72px;line-height:21.32px;color:#333;letter-spacing:0.7px;">6</div>
<div class="t num" style="right:830.4px;top:608.72px;line-height:21.32px;color:#333;letter-spacing:0.7px;">32</div>
<div class="t lnk" style="left:324.5px;top:608.72px;line-height:21.32px;color:#555;letter-spacing:0.671px">Bobbie - Bobbie</div>
<div class="t" style="left:565.2px;top:608.72px;line-height:21.32px;color:#333;letter-spacing:0.74px;">70.210.257/0001-53</div>
<div class="t" style="left:694.6px;top:608.72px;line-height:21.32px;color:#333;letter-spacing:0.632px;">5101 - Venda de prod<span style="text-decoration:none;display:inline-block">...</span></div>
<div class="t num" style="right:195.7px;top:608.72px;line-height:21.32px;color:#333;letter-spacing:0.6px;">28,75</div>
<div class="t" style="left:960.6px;top:608.72px;line-height:21.32px;color:#333;letter-spacing:0.72px;">Emitida</div>
<div class="row" style="top:629.14px;height:21.37px"></div>
<div class="vl" style="left:38.8px;top:629.14px;height:21.37px"></div>
<div class="vl" style="left:76.9px;top:629.14px;height:21.37px"></div>
<div class="vl" style="left:103.1px;top:629.14px;height:21.37px"></div>
<div class="vl" style="left:183.1px;top:629.14px;height:21.37px"></div>
<div class="vl" style="left:273.1px;top:629.14px;height:21.37px"></div>
<div class="vl" style="left:318.1px;top:629.14px;height:21.37px"></div>
<div class="vl" style="left:558px;top:629.14px;height:21.37px"></div>
<div class="vl" style="left:688.1px;top:629.14px;height:21.37px"></div>
<div class="vl" style="left:838px;top:629.14px;height:21.37px"></div>
<div class="vl" style="left:954.2px;top:629.14px;height:21.37px"></div>
<div class="vl" style="left:1044.2px;top:629.14px;height:21.37px"></div>
<svg class="cb" style="left:12px;top:632.94px" width="14" height="14" viewBox="0 0 14 14"><rect x="1" y="1" width="12" height="12" rx="2" fill="#fff" stroke="#7e7f8a" stroke-width="1.8"/></svg>
<svg style="left:42.7px;top:637.04px" width="8" height="8" viewBox="0 0 8 8"><path d="M1.3 1.5L6.7 6.5M6.7 1.5L1.3 6.5" stroke="#c0242b" stroke-width="2"/></svg>
<svg style="left:56px;top:632.54px" width="15" height="14" viewBox="0 0 15 14"><path d="M11.6 0.6L14 2.8L4.2 12.4L1.3 13.4L2.1 10.4Z" fill="#f0a43a"/><path d="M11.6 0.6L14 2.8L12.9 3.9L10.5 1.7Z" fill="#e58a22"/><path d="M2.1 10.4L4.2 12.4L1.3 13.4Z" fill="#f6dcb5"/><path d="M1.2 12.3L2.2 13.2L0.9 13.6Z" fill="#222"/><path d="M3 10.2L12.3 1.3" stroke="#f9c57a" stroke-width="0.9"/></svg>
<svg style="left:84.6px;top:631.94px" width="15" height="15" viewBox="0 0 15 15"><defs><linearGradient id="pg" x1="0" y1="0" x2="0" y2="1"><stop offset="0" stop-color="#f7f7f8"/><stop offset="0.45" stop-color="#e3e4e6"/><stop offset="0.75" stop-color="#b9bbc2"/><stop offset="1" stop-color="#6f7280"/></linearGradient></defs><rect x="3.3" y="0.6" width="8" height="4.6" fill="#f4f4f5" stroke="#c4c5c9" stroke-width="0.9"/><rect x="0.4" y="4.9" width="14.2" height="8.8" rx="1.6" fill="url(#pg)" stroke="#a9abb2" stroke-width="0.5"/><rect x="3.3" y="11" width="8" height="3.6" fill="#dedfe2" stroke="#a4a6ad" stroke-width="0.8"/><circle cx="13" cy="7.3" r="1" fill="#4fae3a"/><circle cx="13" cy="10.2" r="0.9" fill="#efa822"/></svg>
<div class="t" style="left:109.9px;top:630.04px;line-height:21.32px;color:#333;letter-spacing:0.98px;">14/03/22</div>
<div class="t num" style="right:876.8px;top:630.04px;line-height:21.32px;color:#333;letter-spacing:0.7px;">5</div>
<div class="t num" style="right:830.4px;top:630.04px;line-height:21.32px;color:#333;letter-spacing:0.7px;">32</div>
<div class="t lnk" style="left:324.5px;top:630.04px;line-height:21.32px;color:#555;letter-spacing:0.671px">Bobbie - Bobbie</div>
<div class="t" style="left:565.2px;top:630.04px;line-height:21.32px;color:#333;letter-spacing:0.74px;">70.210.257/0001-53</div>
<div class="t" style="left:694.6px;top:630.04px;line-height:21.32px;color:#333;letter-spacing:0.632px;">5101 - Venda de prod<span style="text-decoration:none;display:inline-block">...</span></div>
<div class="t num" style="right:195.7px;top:630.04px;line-height:21.32px;color:#333;letter-spacing:0.6px;">28,75</div>
<div class="t" style="left:960.6px;top:630.04px;line-height:21.32px;color:#333;letter-spacing:0.72px;">Emitida</div>
<div class="t" style="left:1051px;top:629.04px;line-height:21.32px;color:#333;letter-spacing:0.6px">Autorizada</div>
<svg style="left:1115.2px;top:632.34px" width="16" height="15" viewBox="0 0 16 15"><path d="M8 0.8L15.3 14.2H0.7Z" fill="#fff" stroke="#8b8b8b" stroke-width="0.8" stroke-linejoin="round"/><path d="M8 3.2L13.4 13H2.6Z" fill="#f5d21a"/><rect x="7.1" y="5.4" width="1.8" height="4.6" rx="0.6" fill="#111"/><rect x="7.1" y="10.8" width="1.8" height="1.6" fill="#111"/></svg>
<div class="row g" style="top:650.46px;height:21.37px"></div>
<div class="vl" style="left:38.8px;top:650.46px;height:21.37px"></div>
<div class="vl" style="left:76.9px;top:650.46px;height:21.37px"></div>
<div class="vl" style="left:103.1px;top:650.46px;height:21.37px"></div>
<div class="vl" style="left:183.1px;top:650.46px;height:21.37px"></div>
<div class="vl" style="left:273.1px;top:650.46px;height:21.37px"></div>
<div class="vl" style="left:318.1px;top:650.46px;height:21.37px"></div>
<div class="vl" style="left:558px;top:650.46px;height:21.37px"></div>
<div class="vl" style="left:688.1px;top:650.46px;height:21.37px"></div>
<div class="vl" style="left:838px;top:650.46px;height:21.37px"></div>
<div class="vl" style="left:954.2px;top:650.46px;height:21.37px"></div>
<div class="vl" style="left:1044.2px;top:650.46px;height:21.37px"></div>
<svg class="cb" style="left:12px;top:654.26px" width="14" height="14" viewBox="0 0 14 14"><rect x="1" y="1" width="12" height="12" rx="2" fill="#fff" stroke="#7e7f8a" stroke-width="1.8"/></svg>
<svg style="left:42.7px;top:658.36px" width="8" height="8" viewBox="0 0 8 8"><path d="M1.3 1.5L6.7 6.5M6.7 1.5L1.3 6.5" stroke="#c0242b" stroke-width="2"/></svg>
<svg style="left:56px;top:653.86px" width="15" height="14" viewBox="0 0 15 14"><path d="M11.6 0.6L14 2.8L4.2 12.4L1.3 13.4L2.1 10.4Z" fill="#f0a43a"/><path d="M11.6 0.6L14 2.8L12.9 3.9L10.5 1.7Z" fill="#e58a22"/><path d="M2.1 10.4L4.2 12.4L1.3 13.4Z" fill="#f6dcb5"/><path d="M1.2 12.3L2.2 13.2L0.9 13.6Z" fill="#222"/><path d="M3 10.2L12.3 1.3" stroke="#f9c57a" stroke-width="0.9"/></svg>
<svg style="left:84.6px;top:653.26px" width="15" height="15" viewBox="0 0 15 15"><defs><linearGradient id="pg" x1="0" y1="0" x2="0" y2="1"><stop offset="0" stop-color="#f7f7f8"/><stop offset="0.45" stop-color="#e3e4e6"/><stop offset="0.75" stop-color="#b9bbc2"/><stop offset="1" stop-color="#6f7280"/></linearGradient></defs><rect x="3.3" y="0.6" width="8" height="4.6" fill="#f4f4f5" stroke="#c4c5c9" stroke-width="0.9"/><rect x="0.4" y="4.9" width="14.2" height="8.8" rx="1.6" fill="url(#pg)" stroke="#a9abb2" stroke-width="0.5"/><rect x="3.3" y="11" width="8" height="3.6" fill="#dedfe2" stroke="#a4a6ad" stroke-width="0.8"/><circle cx="13" cy="7.3" r="1" fill="#4fae3a"/><circle cx="13" cy="10.2" r="0.9" fill="#efa822"/></svg>
<div class="t" style="left:109.9px;top:651.36px;line-height:21.32px;color:#333;letter-spacing:0.98px;">14/03/22</div>
<div class="t num" style="right:876.8px;top:651.36px;line-height:21.32px;color:#333;letter-spacing:0.7px;">4</div>
<div class="t num" style="right:830.4px;top:651.36px;line-height:21.32px;color:#333;letter-spacing:0.7px;">32</div>
<div class="t lnk" style="left:324.5px;top:651.36px;line-height:21.32px;color:#555;letter-spacing:0.671px">Bobbie - Bobbie</div>
<div class="t" style="left:565.2px;top:651.36px;line-height:21.32px;color:#333;letter-spacing:0.74px;">70.210.257/0001-53</div>
<div class="t" style="left:694.6px;top:651.36px;line-height:21.32px;color:#333;letter-spacing:0.632px;">5101 - Venda de prod<span style="text-decoration:none;display:inline-block">...</span></div>
<div class="t num" style="right:195.7px;top:651.36px;line-height:21.32px;color:#333;letter-spacing:0.6px;">92,00</div>
<div class="t" style="left:960.6px;top:651.36px;line-height:21.32px;color:#333;letter-spacing:0.72px;">Emitida</div>
<div class="row" style="top:671.78px;height:21.37px"></div>
<div class="vl" style="left:38.8px;top:671.78px;height:21.37px"></div>
<div class="vl" style="left:76.9px;top:671.78px;height:21.37px"></div>
<div class="vl" style="left:103.1px;top:671.78px;height:21.37px"></div>
<div class="vl" style="left:183.1px;top:671.78px;height:21.37px"></div>
<div class="vl" style="left:273.1px;top:671.78px;height:21.37px"></div>
<div class="vl" style="left:318.1px;top:671.78px;height:21.37px"></div>
<div class="vl" style="left:558px;top:671.78px;height:21.37px"></div>
<div class="vl" style="left:688.1px;top:671.78px;height:21.37px"></div>
<div class="vl" style="left:838px;top:671.78px;height:21.37px"></div>
<div class="vl" style="left:954.2px;top:671.78px;height:21.37px"></div>
<div class="vl" style="left:1044.2px;top:671.78px;height:21.37px"></div>
<svg class="cb" style="left:12px;top:675.58px" width="14" height="14" viewBox="0 0 14 14"><rect x="1" y="1" width="12" height="12" rx="2" fill="#fff" stroke="#7e7f8a" stroke-width="1.8"/></svg>
<svg style="left:42.7px;top:679.68px" width="8" height="8" viewBox="0 0 8 8"><path d="M1.3 1.5L6.7 6.5M6.7 1.5L1.3 6.5" stroke="#c0242b" stroke-width="2"/></svg>
<svg style="left:56px;top:675.18px" width="15" height="14" viewBox="0 0 15 14"><path d="M11.6 0.6L14 2.8L4.2 12.4L1.3 13.4L2.1 10.4Z" fill="#f0a43a"/><path d="M11.6 0.6L14 2.8L12.9 3.9L10.5 1.7Z" fill="#e58a22"/><path d="M2.1 10.4L4.2 12.4L1.3 13.4Z" fill="#f6dcb5"/><path d="M1.2 12.3L2.2 13.2L0.9 13.6Z" fill="#222"/><path d="M3 10.2L12.3 1.3" stroke="#f9c57a" stroke-width="0.9"/></svg>
<svg style="left:84.6px;top:674.58px" width="15" height="15" viewBox="0 0 15 15"><defs><linearGradient id="pg" x1="0" y1="0" x2="0" y2="1"><stop offset="0" stop-color="#f7f7f8"/><stop offset="0.45" stop-color="#e3e4e6"/><stop offset="0.75" stop-color="#b9bbc2"/><stop offset="1" stop-color="#6f7280"/></linearGradient></defs><rect x="3.3" y="0.6" width="8" height="4.6" fill="#f4f4f5" stroke="#c4c5c9" stroke-width="0.9"/><rect x="0.4" y="4.9" width="14.2" height="8.8" rx="1.6" fill="url(#pg)" stroke="#a9abb2" stroke-width="0.5"/><rect x="3.3" y="11" width="8" height="3.6" fill="#dedfe2" stroke="#a4a6ad" stroke-width="0.8"/><circle cx="13" cy="7.3" r="1" fill="#4fae3a"/><circle cx="13" cy="10.2" r="0.9" fill="#efa822"/></svg>
<div class="t" style="left:109.9px;top:672.68px;line-height:21.32px;color:#333;letter-spacing:0.98px;">25/02/22</div>
<div class="t num" style="right:876.8px;top:672.68px;line-height:21.32px;color:#333;letter-spacing:0.7px;">3</div>
<div class="t num" style="right:830.4px;top:672.68px;line-height:21.32px;color:#333;letter-spacing:0.7px;">32</div>
<div class="t lnk" style="left:324.5px;top:672.68px;line-height:21.32px;color:#555;letter-spacing:0.671px">Bobbie - Bobbie</div>
<div class="t" style="left:565.2px;top:672.68px;line-height:21.32px;color:#333;letter-spacing:0.74px;">70.210.257/0001-53</div>
<div class="t" style="left:694.6px;top:672.68px;line-height:21.32px;color:#333;letter-spacing:0.632px;">5101 - Venda de prod<span style="text-decoration:none;display:inline-block">...</span></div>
<div class="t num" style="right:195.7px;top:672.68px;line-height:21.32px;color:#333;letter-spacing:0.6px;">2.637,46</div>
<div class="t" style="left:960.6px;top:672.68px;line-height:21.32px;color:#333;letter-spacing:0.72px;">Emitida</div>
<div class="t" style="left:1051px;top:671.68px;line-height:21.32px;color:#333;letter-spacing:0.6px">Autorizada</div>
<svg style="left:1115.2px;top:674.98px" width="16" height="15" viewBox="0 0 16 15"><path d="M8 0.8L15.3 14.2H0.7Z" fill="#fff" stroke="#8b8b8b" stroke-width="0.8" stroke-linejoin="round"/><path d="M8 3.2L13.4 13H2.6Z" fill="#f5d21a"/><rect x="7.1" y="5.4" width="1.8" height="4.6" rx="0.6" fill="#111"/><rect x="7.1" y="10.8" width="1.8" height="1.6" fill="#111"/></svg>
<div class="row g" style="top:693.1px;height:21.37px"></div>
<div class="vl" style="left:38.8px;top:693.1px;height:21.37px"></div>
<div class="vl" style="left:76.9px;top:693.1px;height:21.37px"></div>
<div class="vl" style="left:103.1px;top:693.1px;height:21.37px"></div>
<div class="vl" style="left:183.1px;top:693.1px;height:21.37px"></div>
<div class="vl" style="left:273.1px;top:693.1px;height:21.37px"></div>
<div class="vl" style="left:318.1px;top:693.1px;height:21.37px"></div>
<div class="vl" style="left:558px;top:693.1px;height:21.37px"></div>
<div class="vl" style="left:688.1px;top:693.1px;height:21.37px"></div>
<div class="vl" style="left:838px;top:693.1px;height:21.37px"></div>
<div class="vl" style="left:954.2px;top:693.1px;height:21.37px"></div>
<div class="vl" style="left:1044.2px;top:693.1px;height:21.37px"></div>
<svg class="cb" style="left:12px;top:696.9px" width="14" height="14" viewBox="0 0 14 14"><rect x="1" y="1" width="12" height="12" rx="2" fill="#fff" stroke="#7e7f8a" stroke-width="1.8"/></svg>
<svg style="left:42.7px;top:701px" width="8" height="8" viewBox="0 0 8 8"><path d="M1.3 1.5L6.7 6.5M6.7 1.5L1.3 6.5" stroke="#c0242b" stroke-width="2"/></svg>
<svg style="left:56px;top:696.5px" width="15" height="14" viewBox="0 0 15 14"><path d="M11.6 0.6L14 2.8L4.2 12.4L1.3 13.4L2.1 10.4Z" fill="#f0a43a"/><path d="M11.6 0.6L14 2.8L12.9 3.9L10.5 1.7Z" fill="#e58a22"/><path d="M2.1 10.4L4.2 12.4L1.3 13.4Z" fill="#f6dcb5"/><path d="M1.2 12.3L2.2 13.2L0.9 13.6Z" fill="#222"/><path d="M3 10.2L12.3 1.3" stroke="#f9c57a" stroke-width="0.9"/></svg>
<svg style="left:84.6px;top:695.9px" width="15" height="15" viewBox="0 0 15 15"><defs><linearGradient id="pg" x1="0" y1="0" x2="0" y2="1"><stop offset="0" stop-color="#f7f7f8"/><stop offset="0.45" stop-color="#e3e4e6"/><stop offset="0.75" stop-color="#b9bbc2"/><stop offset="1" stop-color="#6f7280"/></linearGradient></defs><rect x="3.3" y="0.6" width="8" height="4.6" fill="#f4f4f5" stroke="#c4c5c9" stroke-width="0.9"/><rect x="0.4" y="4.9" width="14.2" height="8.8" rx="1.6" fill="url(#pg)" stroke="#a9abb2" stroke-width="0.5"/><rect x="3.3" y="11" width="8" height="3.6" fill="#dedfe2" stroke="#a4a6ad" stroke-width="0.8"/><circle cx="13" cy="7.3" r="1" fill="#4fae3a"/><circle cx="13" cy="10.2" r="0.9" fill="#efa822"/></svg>
<div class="t" style="left:109.9px;top:694px;line-height:21.32px;color:#333;letter-spacing:0.98px;">25/02/22</div>
<div class="t num" style="right:876.8px;top:694px;line-height:21.32px;color:#333;letter-spacing:0.7px;">2</div>
<div class="t num" style="right:830.4px;top:694px;line-height:21.32px;color:#333;letter-spacing:0.7px;">32</div>
<div class="t lnk" style="left:324.5px;top:694px;line-height:21.32px;color:#555;letter-spacing:0.671px">Bobbie - Bobbie</div>
<div class="t" style="left:565.2px;top:694px;line-height:21.32px;color:#333;letter-spacing:0.74px;">70.210.257/0001-53</div>
<div class="t" style="left:694.6px;top:694px;line-height:21.32px;color:#333;letter-spacing:0.632px;">5101 - Venda de prod<span style="text-decoration:none;display:inline-block">...</span></div>
<div class="t num" style="right:195.7px;top:694px;line-height:21.32px;color:#333;letter-spacing:0.6px;">8.791,52</div>
<div class="t" style="left:960.6px;top:694px;line-height:21.32px;color:#333;letter-spacing:0.72px;">Emitida</div>
<div class="abs" style="left:-2px;top:157px;width:42px;height:26px;border:3px solid #ff0000"></div>
<div class="abs" style="left:37px;top:157px;width:1120px;height:26px;border:3px solid #ff0000"></div>
<style>.nm{letter-spacing:0.9px}.cn{letter-spacing:0.72px}</style>
</body></html>
